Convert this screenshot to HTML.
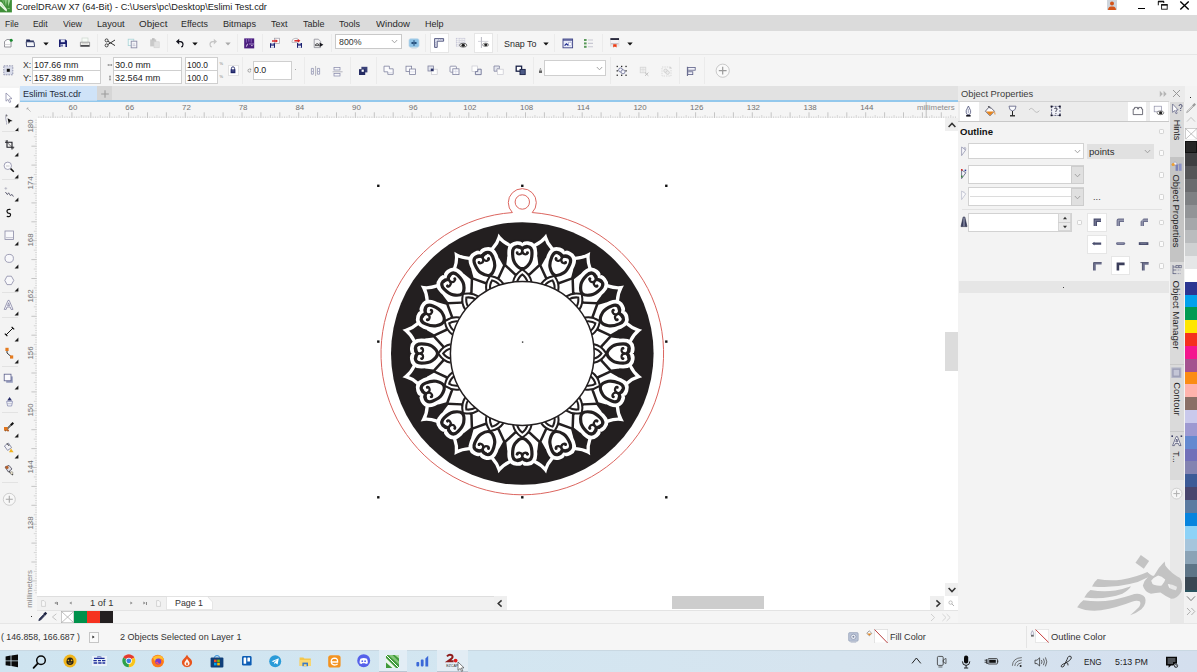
<!DOCTYPE html>
<html><head><meta charset="utf-8"><title>CorelDRAW X7</title>
<style>
html,body{margin:0;padding:0;background:#fff;}
body{width:1197px;height:672px;position:relative;overflow:hidden;font-family:"Liberation Sans",sans-serif;}
#r{position:absolute;left:0;top:0;width:1197px;height:672px;overflow:hidden;}
#r div,#r svg,#r span.t{position:absolute;}
#r span.t{white-space:pre;display:block;}
</style></head><body><div id="r">
<div style="left:0px;top:0px;width:1197px;height:15px;background:#ffffff;"></div>
<svg style="left:0px;top:0px;" width="12" height="12.5" viewBox="0 0 12 12.5"><rect width="11.9" height="12.4" fill="#3f8f39"/>
<path d="M4.4 0 L6 6.4 L7 0 Z" fill="#86c67e"/><path d="M7.6 0 L8.2 6.6 L10.4 0 Z" fill="#9fd497"/><path d="M2 0 L4.6 5.6 L3.6 0 Z" fill="#6db565"/>
<path d="M0 1.6 L1.8 2.4 L7 9.6 L6.8 11.4 L5 10.6 L0 5.8 Z" fill="#e9f7e5"/><path d="M1.4 4.2 L3.6 7.2" stroke="#4f9a48" stroke-width="0.5" stroke-dasharray="0.6 0.5"/>
<rect x="7.6" y="8.1" width="2.1" height="0.8" fill="#93d38b"/></svg>
<span class="t" style="left:15.7px;top:-0.7000000000000002px;height:16px;line-height:16px;font-size:9.3px;color:#1a1a1a;transform:scaleX(0.9913);transform-origin:0 50%;">CorelDRAW X7 (64-Bit) - C:\Users\pc\Desktop\Eslimi Test.cdr</span>
<svg style="left:1107px;top:0px;" width="10" height="10" viewBox="0 0 10 10"><rect width="10" height="10" fill="#cfd5dc"/>
<circle cx="5" cy="3.6" r="2" fill="#d4541a"/>
<path d="M1 10 Q1.2 7 4 6.6 L6 6.6 Q8.8 7 9 10 Z" fill="#d4541a"/></svg>
<div style="left:1137.6px;top:7.6px;width:7.8px;height:1.4px;background:#000;"></div>
<svg style="left:1157px;top:0px;" width="12" height="11" viewBox="0 0 12 11"><path d="M1.3 5.3 V1.3 H6.8 V3" fill="none" stroke="#111" stroke-width="1"/><path d="M1 1.6 H7" stroke="#111" stroke-width="1.4"/>
<rect x="4.6" y="4.6" width="5.6" height="4.6" fill="#fff" stroke="#111" stroke-width="0.9"/><path d="M4.3 4.9 H10.5" stroke="#111" stroke-width="1.5"/></svg>
<svg style="left:1179px;top:0px;" width="12" height="11" viewBox="0 0 12 11"><path d="M1.3 1.6 L9.7 9.4 M9.7 1.6 L1.3 9.4" stroke="#000" stroke-width="1.4" fill="none"/></svg>
<div style="left:0px;top:15px;width:1197px;height:16px;background:#dbdbdb;"></div>
<span class="t" style="left:4.5px;top:16.1px;height:16px;line-height:16px;font-size:9.3px;color:#2a2a2a;transform:scaleX(0.9143);transform-origin:0 50%;">File</span>
<span class="t" style="left:33px;top:16.1px;height:16px;line-height:16px;font-size:9.3px;color:#2a2a2a;transform:scaleX(0.9048);transform-origin:0 50%;">Edit</span>
<span class="t" style="left:63px;top:16.1px;height:16px;line-height:16px;font-size:9.3px;color:#2a2a2a;transform:scaleX(0.9505);transform-origin:0 50%;">View</span>
<span class="t" style="left:97.2px;top:16.1px;height:16px;line-height:16px;font-size:9.3px;color:#2a2a2a;transform:scaleX(0.9885);transform-origin:0 50%;">Layout</span>
<span class="t" style="left:139px;top:16.1px;height:16px;line-height:16px;font-size:9.3px;color:#2a2a2a;transform:scaleX(1.0604);transform-origin:0 50%;">Object</span>
<span class="t" style="left:181.3px;top:16.1px;height:16px;line-height:16px;font-size:9.3px;color:#2a2a2a;transform:scaleX(0.9555);transform-origin:0 50%;">Effects</span>
<span class="t" style="left:222.5px;top:16.1px;height:16px;line-height:16px;font-size:9.3px;color:#2a2a2a;transform:scaleX(0.9823);transform-origin:0 50%;">Bitmaps</span>
<span class="t" style="left:270.5px;top:16.1px;height:16px;line-height:16px;font-size:9.3px;color:#2a2a2a;transform:scaleX(0.9674);transform-origin:0 50%;">Text</span>
<span class="t" style="left:302.5px;top:16.1px;height:16px;line-height:16px;font-size:9.3px;color:#2a2a2a;transform:scaleX(0.9671);transform-origin:0 50%;">Table</span>
<span class="t" style="left:339px;top:16.1px;height:16px;line-height:16px;font-size:9.3px;color:#2a2a2a;transform:scaleX(0.9673);transform-origin:0 50%;">Tools</span>
<span class="t" style="left:375.5px;top:16.1px;height:16px;line-height:16px;font-size:9.3px;color:#2a2a2a;transform:scaleX(1.0279);transform-origin:0 50%;">Window</span>
<span class="t" style="left:424.5px;top:16.1px;height:16px;line-height:16px;font-size:9.3px;color:#2a2a2a;transform:scaleX(0.9673);transform-origin:0 50%;">Help</span>
<div style="left:0px;top:31px;width:1197px;height:55px;background:#f5f5f5;"></div>
<div style="left:0px;top:53.6px;width:1197px;height:0.8px;background:#e6e6e6;"></div>
<div style="left:0px;top:86px;width:1197px;height:15px;background:#e2e2e2;"></div>
<div style="left:0px;top:86px;width:20px;height:537px;background:#f3f3f3;"></div>
<div style="left:958px;top:86px;width:239px;height:537px;background:#f3f3f3;"></div>
<div style="left:0px;top:623px;width:1197px;height:27px;background:#f6f6f6;"></div>
<div style="left:0px;top:650px;width:1197px;height:22px;background:linear-gradient(90deg,#cfe4f0 0%,#d3e6f1 40%,#d6e4ef 70%,#d4dfee 100%);"></div>
<svg style="left:3px;top:38px;" width="11" height="10" viewBox="0 0 11 10"><path d="M1.5 3.5 L4 1.5 H8 V9 H1.5 Z" fill="#fdfdfd" stroke="#8a8a92" stroke-width="0.9"/><path d="M1.5 6.5 H8" stroke="#c8c8cc" stroke-width="0.7"/><circle cx="8.2" cy="2.3" r="1.5" fill="#1a8a2e"/></svg>
<svg style="left:25px;top:38px;" width="11" height="10" viewBox="0 0 11 10"><path d="M1.2 1.6 H4.6 L5.4 2.6 H8.8 V4 H1.2 Z" fill="#1b2350"/><path d="M1.2 3.8 H9 L9.6 8.6 H1.6 Z" fill="#f4f6fa" stroke="#27305e" stroke-width="0.9"/></svg>
<svg style="left:42.5px;top:42px;" width="6" height="4" viewBox="0 0 6 4"><path d="M0.3 0.6 H5.7 L3 3.6 Z" fill="#111"/></svg>
<svg style="left:58px;top:38px;" width="10" height="10" viewBox="0 0 10 10"><path d="M1 1.4 H7.6 L9 2.8 V9 H1 Z" fill="#1b2070"/><rect x="2.8" y="1.6" width="4" height="2.6" fill="#dfe3f3"/><rect x="2.6" y="6" width="4.8" height="3" fill="#e9ecf7"/><rect x="3.4" y="6.5" width="1.2" height="2" fill="#1b2070"/></svg>
<svg style="left:79px;top:37px;" width="12" height="11" viewBox="0 0 12 11"><rect x="3" y="1" width="6" height="4.6" fill="#f6fbf6" stroke="#cdd6cf" stroke-width="0.7"/><path d="M1.4 5.2 H10.6 V9.4 H1.4 Z" fill="#efefec" stroke="#8a8a8c" stroke-width="0.8"/><rect x="1.6" y="8" width="8.8" height="1.6" fill="#4a4a4e"/><path d="M3 6.6 H9" stroke="#c9c9c6" stroke-width="0.6"/></svg>
<div style="left:97px;top:34px;width:1px;height:18px;background:#ebebeb;"></div>
<svg style="left:104px;top:38px;" width="12" height="10" viewBox="0 0 12 10"><circle cx="2.6" cy="2.4" r="1.5" fill="none" stroke="#333" stroke-width="0.9"/><circle cx="2.6" cy="7.4" r="1.5" fill="none" stroke="#333" stroke-width="0.9"/><path d="M3.8 3.2 L11 7.6 M3.8 6.6 L11 2" stroke="#333" stroke-width="1" fill="none"/></svg>
<svg style="left:127px;top:38px;" width="12" height="11" viewBox="0 0 12 11"><rect x="1.2" y="1.2" width="5.6" height="6.4" fill="#f3fbfb" stroke="#a9d3d6" stroke-width="0.8"/><rect x="4.2" y="3.2" width="5.6" height="6.6" fill="#f5f5f9" stroke="#8c8ca6" stroke-width="0.9"/><path d="M5.6 6 H8 M5.6 7.6 H8.4" stroke="#b7b7c6" stroke-width="0.7"/></svg>
<svg style="left:149px;top:37px;" width="12" height="12" viewBox="0 0 12 12"><rect x="1.2" y="2.4" width="6" height="7" fill="#c9c9c9"/><rect x="3" y="1.2" width="2.6" height="2" fill="#bdbdbd"/><rect x="5" y="4.8" width="5.2" height="6" fill="#e1e1e1" stroke="#cfcfcf" stroke-width="0.6"/></svg>
<div style="left:167px;top:34px;width:1px;height:18px;background:#ebebeb;"></div>
<svg style="left:175px;top:38px;" width="10" height="10" viewBox="0 0 10 10"><path d="M1 3.6 L4.2 0.8 V6.4 Z" fill="#14141e"/><path d="M3.6 3.6 H5.4 Q8 3.8 8 6.4 Q8 8.4 6.2 9" fill="none" stroke="#14141e" stroke-width="1.2"/></svg>
<svg style="left:192.3px;top:41.5px;" width="6" height="4" viewBox="0 0 6 4"><path d="M0.3 0.6 H5.7 L3 3.6 Z" fill="#111"/></svg>
<svg style="left:208px;top:38px;" width="10" height="10" viewBox="0 0 10 10"><path d="M9 3.6 L5.8 0.8 V6.4 Z" fill="#c6c6c6"/><path d="M6.4 3.6 H4.6 Q2 3.8 2 6.4 Q2 8.4 3.8 9" fill="none" stroke="#c6c6c6" stroke-width="1.2"/></svg>
<svg style="left:224.5px;top:41.5px;" width="6" height="4" viewBox="0 0 6 4"><path d="M0.3 0.6 H5.7 L3 3.6 Z" fill="#a9a9a9"/></svg>
<div style="left:236.5px;top:34px;width:1px;height:18px;background:#ebebeb;"></div>
<svg style="left:244px;top:37.5px;" width="11" height="11" viewBox="0 0 11 11"><rect x="0.2" y="0.4" width="10" height="10" fill="#4a1d7e"/><path d="M2.4 0.4 V4.6 M4.8 0.4 V3.6 M7.2 0.4 V4.6" stroke="#8e6bbd" stroke-width="0.9"/><path d="M5 6 H10.2" stroke="#b9a2d8" stroke-width="0.8"/><path d="M3.6 5.8 L2.4 8.6 M7.2 7.6 H8.6" stroke="#efe8f8" stroke-width="0.9"/></svg>
<div style="left:262px;top:34px;width:1px;height:18px;background:#ebebeb;"></div>
<svg style="left:269px;top:37px;" width="12" height="12" viewBox="0 0 12 12"><rect x="5.4" y="1.2" width="5.2" height="5.4" fill="#fafafa" stroke="#9a9aa6" stroke-width="0.7"/><path d="M3 4 H7.2" stroke="#d81e1e" stroke-width="1.4"/><path d="M6.6 2.2 L9 4 L6.6 5.8 Z" fill="#d81e1e"/><rect x="1" y="6.2" width="5" height="4.6" fill="#1b2070"/><rect x="2" y="8.6" width="3" height="2.2" fill="#e6e9f5"/><rect x="2.2" y="6.2" width="2.4" height="1.3" fill="#cfd4ee"/></svg>
<svg style="left:291px;top:37px;" width="12" height="12" viewBox="0 0 12 12"><path d="M1 4.6 Q1 1.6 4 1.4 L6.4 1.4 V5.4 H1 Z" fill="#fafafa" stroke="#a5a5ae" stroke-width="0.7"/><path d="M3.4 3.8 H7.6" stroke="#d81e1e" stroke-width="1.4"/><path d="M7 2 L9.4 3.8 L7 5.6 Z" fill="#d81e1e"/><rect x="6" y="6" width="5" height="4.8" fill="#1b2070"/><rect x="7" y="8.6" width="3" height="2.2" fill="#e6e9f5"/><rect x="7.2" y="6" width="2.4" height="1.3" fill="#cfd4ee"/></svg>
<svg style="left:313px;top:37.5px;" width="12" height="11" viewBox="0 0 12 11"><path d="M1.2 1.2 H5.4 L7.6 3.4 V9.6 H1.2 Z" fill="#f1f1f3" stroke="#8d8d96" stroke-width="0.8"/><path d="M2.2 6.8 Q4 4.6 6 6.6" stroke="#222" stroke-width="0.9" fill="none"/><path d="M6.6 4.6 L10.4 6.8 L6.6 9 Z" fill="#15151c"/><path d="M2 7.6 H6.6" stroke="#333" stroke-width="0.8"/></svg>
<div style="left:330.5px;top:34px;width:1px;height:18px;background:#ebebeb;"></div>
<div style="left:335px;top:33.5px;width:66.5px;height:15px;background:#fff;border:1px solid #c9c9c9;box-sizing:border-box;"></div>
<span class="t" style="left:338.5px;top:33.9px;height:16px;line-height:16px;font-size:9.1px;color:#333;transform:scaleX(0.9668);transform-origin:0 50%;">800%</span>
<svg style="left:391px;top:38.5px;" width="7" height="5" viewBox="0 0 7 5"><path d="M0.8 1 L3.5 3.8 L6.2 1" fill="none" stroke="#9a9a9a" stroke-width="0.9"/></svg>
<svg style="left:407.5px;top:37.5px;" width="12" height="11" viewBox="0 0 12 11"><rect x="1" y="0.8" width="10" height="8.4" rx="1.6" fill="#8fc3e6" stroke="#bcd7e8" stroke-width="0.8"/><path d="M3 5 H9 M6 2.2 V7.8" stroke="#123a6a" stroke-width="0.9"/><path d="M4 3.8 L5.2 5 L4 6.2 Z M8 3.8 L6.8 5 L8 6.2 Z" fill="#123a6a"/><path d="M3.4 10.2 H8.6" stroke="#c9d5dd" stroke-width="0.8"/></svg>
<div style="left:424.5px;top:34px;width:1px;height:18px;background:#ebebeb;"></div>
<div style="left:429.5px;top:33px;width:19.5px;height:19.5px;background:#fff;border:1px solid #e6e6e6;box-sizing:border-box;"></div>
<svg style="left:433px;top:37px;" width="12" height="12" viewBox="0 0 12 12"><path d="M1.6 1.6 H10.6 V4.2 H4.2 V10.4 H1.6 Z" fill="#e4e7f3" stroke="#4a4e78" stroke-width="0.9"/><path d="M5.5 1.8 V3 M7.5 1.8 V3 M9.2 1.8 V3 M1.8 5.6 H3 M1.8 7.4 H3 M1.8 9 H3" stroke="#8f93b5" stroke-width="0.5"/></svg>
<svg style="left:455px;top:37px;" width="13" height="12" viewBox="0 0 13 12"><path d="M1 1.4 H10 M1 3.4 H10 M1 5.4 H10 M1 7.4 H10 M1 9.2 H6 M1.4 1 V9.6 M4.2 1 V9.6 M7 1 V8 M9.8 1 V6" stroke="#b9b9cf" stroke-width="0.6" stroke-dasharray="0.9 0.5"/><ellipse cx="8.2" cy="8.2" rx="3.6" ry="1.9" fill="#fff" stroke="#444" stroke-width="0.8"/><ellipse cx="8.2" cy="8.2" rx="1.7" ry="1.5" fill="#1a1a1a"/></svg>
<div style="left:473.5px;top:33px;width:19.5px;height:19.5px;background:#fff;border:1px solid #e6e6e6;box-sizing:border-box;"></div>
<svg style="left:477px;top:36px;" width="13" height="13" viewBox="0 0 13 13"><path d="M4.4 1 V12" stroke="#9a9aa8" stroke-width="0.7"/><path d="M1 5.4 H11.4" stroke="#c2c2cc" stroke-width="0.7"/><ellipse cx="8.6" cy="8.8" rx="3" ry="1.7" fill="#fff" stroke="#666" stroke-width="0.7"/><ellipse cx="8.8" cy="8.8" rx="1.6" ry="1.4" fill="#222"/></svg>
<div style="left:496.5px;top:34px;width:1px;height:18px;background:#ebebeb;"></div>
<span class="t" style="left:503.5px;top:35.6px;height:16px;line-height:16px;font-size:9.3px;color:#2a2a2a;transform:scaleX(0.9571);transform-origin:0 50%;">Snap To</span>
<svg style="left:542.5px;top:41.5px;" width="6" height="4" viewBox="0 0 6 4"><path d="M0.3 0.6 H5.7 L3 3.6 Z" fill="#111"/></svg>
<div style="left:554px;top:34px;width:1px;height:18px;background:#ebebeb;"></div>
<svg style="left:561.5px;top:37.5px;" width="12" height="11" viewBox="0 0 12 11"><rect x="1" y="1" width="9.6" height="8.8" fill="#e9ecf8" stroke="#3f4488" stroke-width="0.9"/><path d="M1 2 H10.6" stroke="#3f4488" stroke-width="1.3"/><path d="M2.6 7.6 L4.4 5.8 L6 7.2 L8.6 4.2" stroke="#1d2a8c" stroke-width="1.2" fill="none"/><rect x="6.6" y="4.2" width="2.8" height="3.2" fill="#fff" stroke="#9da3cf" stroke-width="0.5"/></svg>
<svg style="left:583px;top:37.5px;" width="12" height="11" viewBox="0 0 12 11"><rect x="1" y="1" width="2.6" height="2" fill="#5a9a5a"/><rect x="1" y="4.4" width="2.6" height="2" fill="#5a9a5a"/><rect x="1" y="7.8" width="2.6" height="2" fill="#5a9a5a"/><path d="M5 2 H10 M5 5.4 H10 M5 8.8 H10" stroke="#c8c8d2" stroke-width="1.1"/></svg>
<div style="left:601.5px;top:34px;width:1px;height:18px;background:#ebebeb;"></div>
<svg style="left:609px;top:37px;" width="12" height="12" viewBox="0 0 12 12"><rect x="1.4" y="1.4" width="8.6" height="7.6" fill="#f4f2f4" stroke="#d8d4d8" stroke-width="0.6"/><rect x="1.4" y="1.2" width="8.6" height="1.7" fill="#15152a"/><path d="M1.8 6.8 H9.6" stroke="#c9bfc3" stroke-width="1.4"/><path d="M4.2 7.2 H7.6 V10.6 L5.9 9.4 L4.2 10.6 Z" fill="#ee3a12"/></svg>
<svg style="left:626.8px;top:41.5px;" width="6" height="4" viewBox="0 0 6 4"><path d="M0.3 0.6 H5.7 L3 3.6 Z" fill="#111"/></svg>
<svg style="left:3px;top:65px;" width="11" height="11" viewBox="0 0 11 11"><rect x="0.8" y="0.8" width="9" height="9" fill="#d9dcea" stroke="#7d819f" stroke-width="0.8" stroke-dasharray="1.6 1"/><rect x="3.8" y="3.8" width="3" height="3" fill="#111"/></svg>
<span class="t" style="left:22.5px;top:57px;height:16px;line-height:16px;font-size:9.1px;color:#333;transform:scaleX(0.9537);transform-origin:0 50%;">X:</span>
<span class="t" style="left:22.5px;top:70px;height:16px;line-height:16px;font-size:9.1px;color:#333;transform:scaleX(1.0128);transform-origin:0 50%;">Y:</span>
<div style="left:32px;top:57px;width:68.5px;height:14px;background:#fff;border:1px solid #cfcfcf;box-sizing:border-box;"></div>
<div style="left:32px;top:70px;width:68.5px;height:14px;background:#fff;border:1px solid #cfcfcf;box-sizing:border-box;"></div>
<span class="t" style="left:33.8px;top:57.099999999999994px;height:16px;line-height:16px;font-size:9.0px;color:#222;transform:scaleX(0.9863);transform-origin:0 50%;">107.66 mm</span>
<span class="t" style="left:33.8px;top:70.1px;height:16px;line-height:16px;font-size:9.0px;color:#222;transform:scaleX(0.9875);transform-origin:0 50%;">157.389 mm</span>
<svg style="left:107px;top:61.5px;" width="6" height="6" viewBox="0 0 6 6"><path d="M1.2 3 H4.6 M1.2 2.2 V3.8 M4.6 2.2 V3.8" stroke="#666" stroke-width="0.7"/></svg>
<svg style="left:107px;top:74.5px;" width="6" height="6" viewBox="0 0 6 6"><path d="M3 1.2 V4.8 M2.2 1.2 H3.8 M2.2 4.8 H3.8" stroke="#666" stroke-width="0.7"/></svg>
<div style="left:113px;top:57px;width:68.5px;height:14px;background:#fff;border:1px solid #cfcfcf;box-sizing:border-box;"></div>
<div style="left:113px;top:70px;width:68.5px;height:14px;background:#fff;border:1px solid #cfcfcf;box-sizing:border-box;"></div>
<span class="t" style="left:114.5px;top:57.099999999999994px;height:16px;line-height:16px;font-size:9.0px;color:#222;transform:scaleX(1.0197);transform-origin:0 50%;">30.0 mm</span>
<span class="t" style="left:114.5px;top:70.1px;height:16px;line-height:16px;font-size:9.0px;color:#222;transform:scaleX(1.0063);transform-origin:0 50%;">32.564 mm</span>
<div style="left:184.5px;top:57px;width:33.5px;height:14px;background:#fff;border:1px solid #cfcfcf;box-sizing:border-box;"></div>
<div style="left:184.5px;top:70px;width:33.5px;height:14px;background:#fff;border:1px solid #cfcfcf;box-sizing:border-box;"></div>
<span class="t" style="left:186.5px;top:57.099999999999994px;height:16px;line-height:16px;font-size:9.0px;color:#222;transform:scaleX(0.9325);transform-origin:0 50%;">100.0</span>
<span class="t" style="left:186.5px;top:70.1px;height:16px;line-height:16px;font-size:9.0px;color:#222;transform:scaleX(0.9325);transform-origin:0 50%;">100.0</span>
<span class="t" style="left:219.4px;top:55.8px;height:16px;line-height:16px;font-size:4px;color:#777;">%</span>
<span class="t" style="left:219.4px;top:69px;height:16px;line-height:16px;font-size:4px;color:#777;">%</span>
<div style="left:227.5px;top:65px;width:11px;height:10.5px;background:#fff;border:1px solid #e2e2e2;box-sizing:border-box;"></div>
<svg style="left:230px;top:66.2px;" width="6" height="8" viewBox="0 0 6 8"><path d="M1.4 4 V2.4 Q1.4 0.8 3 0.8 Q4.6 0.8 4.6 2.4 V4" fill="none" stroke="#222a6e" stroke-width="0.9"/><rect x="0.6" y="3.4" width="4.8" height="3.8" fill="#1d2366"/><rect x="1.6" y="4.6" width="2.8" height="0.7" fill="#7a80b8"/></svg>
<div style="left:241.5px;top:57px;width:1px;height:27px;background:#ebebeb;"></div>
<svg style="left:246.5px;top:68px;" width="5" height="5" viewBox="0 0 5 5"><path d="M3.8 1.6 Q2.4 0.4 1.2 1.6 Q0.4 3 1.6 4 Q3 4.6 3.9 3.4" fill="none" stroke="#777" stroke-width="0.6"/><path d="M3 0.6 L4.2 1.6 L3 2.4" fill="none" stroke="#777" stroke-width="0.5"/></svg>
<div style="left:253px;top:60.5px;width:38.5px;height:19.5px;background:#fff;border:1px solid #cfcfcf;box-sizing:border-box;"></div>
<span class="t" style="left:254.3px;top:62.3px;height:16px;line-height:16px;font-size:9.0px;color:#222;transform:scaleX(0.9752);transform-origin:0 50%;">0.0</span>
<div style="left:295px;top:69px;width:0.9px;height:0.9px;background:#aaa;"></div>
<div style="left:303.5px;top:57px;width:1px;height:27px;background:#ebebeb;"></div>
<svg style="left:310px;top:64.5px;" width="12" height="12" viewBox="0 0 12 12"><path d="M5.6 1 V11" stroke="#8a8a9a" stroke-width="0.6"/><path d="M1.4 3.4 H3.4 V9.2 H1.4 Z" fill="#f8f8fb" stroke="#8486a8" stroke-width="0.7"/><path d="M7.4 3.4 H9.6 V9.2 H7.4 Z" fill="#f8f8fb" stroke="#8486a8" stroke-width="0.7"/><path d="M2 7 Q2.6 5.8 3.2 7 M8 7 Q8.6 5.8 9.2 7" stroke="#8486a8" stroke-width="0.6" fill="none"/></svg>
<svg style="left:331.5px;top:65.5px;" width="12" height="12" viewBox="0 0 12 12"><path d="M0.6 5.8 H10.6" stroke="#8a8a9a" stroke-width="0.6"/><rect x="2" y="1.4" width="6" height="2.6" fill="#f8f8fb" stroke="#8486a8" stroke-width="0.7"/><rect x="2" y="7.4" width="6" height="2.6" fill="#f8f8fb" stroke="#8486a8" stroke-width="0.7"/></svg>
<div style="left:350px;top:57px;width:1px;height:27px;background:#ebebeb;"></div>
<svg style="left:357.5px;top:66px;" width="11" height="10" viewBox="0 0 11 10"><rect x="3.4" y="0.8" width="6" height="5.6" fill="#3a4178"/><rect x="1" y="3.2" width="6.2" height="5.8" fill="#252c63"/><rect x="3.6" y="3.6" width="2.2" height="2.2" fill="#fff"/></svg>
<div style="left:376px;top:57px;width:1px;height:27px;background:#ebebeb;"></div>
<svg style="left:382.5px;top:65.3px;" width="12" height="11" viewBox="0 0 12 11"><path d="M1 1.2 H6.4 V3.8 H10.2 V9.4 H4.8 V6.8 H1 Z" fill="#fbfbfd" stroke="#80839f" stroke-width="0.8"/><path d="M5 7.6 H10" stroke="#c9cbdc" stroke-width="0.5"/></svg>
<svg style="left:404.5px;top:65.3px;" width="12" height="11" viewBox="0 0 12 11"><rect x="1" y="1.2" width="5.6" height="5.2" fill="#fbfbfd" stroke="#80839f" stroke-width="0.8"/><rect x="4.6" y="4" width="5.8" height="5.4" fill="#fbfbfd" stroke="#80839f" stroke-width="0.8"/><path d="M5 6.8 H10" stroke="#c9cbdc" stroke-width="0.5"/></svg>
<svg style="left:426.5px;top:65.3px;" width="12" height="11" viewBox="0 0 12 11"><rect x="4.4" y="4.2" width="5.8" height="5.2" fill="#fdfdfd" stroke="#c8c8cf" stroke-width="0.7"/><rect x="1" y="1" width="5.4" height="5" fill="#e2e4ee" stroke="#80839f" stroke-width="0.8"/><rect x="3.8" y="3.6" width="2.6" height="2.4" fill="#2c3266"/></svg>
<svg style="left:448.5px;top:65.3px;" width="12" height="11" viewBox="0 0 12 11"><rect x="1" y="1.2" width="6.4" height="6" rx="0.8" fill="#fbfbfd" stroke="#80839f" stroke-width="0.8"/><rect x="3.8" y="3.8" width="6.2" height="5.8" fill="#fbfbfd" stroke="#80839f" stroke-width="0.8"/><path d="M4.2 6.4 H9.6 M6.8 4.2 V9.2" stroke="#c9cbdc" stroke-width="0.5"/></svg>
<svg style="left:470.5px;top:65.3px;" width="12" height="11" viewBox="0 0 12 11"><rect x="1" y="1" width="5.6" height="5.4" fill="#fdfdfd" stroke="#c9c9d2" stroke-width="0.7"/><path d="M6.8 4.2 H10.2 V9.6 H4.4 V6.6 H6.8 Z" fill="#e9ebf3" stroke="#62668a" stroke-width="0.8"/></svg>
<svg style="left:492.5px;top:65.3px;" width="12" height="11" viewBox="0 0 12 11"><path d="M1 1 H6.4 V3.8 H4 V6.2 H1 Z" fill="#e6e8f0" stroke="#80839f" stroke-width="0.8"/><rect x="4.4" y="4.2" width="5.8" height="5.4" fill="#fdfdfd" stroke="#c9c9d2" stroke-width="0.7"/></svg>
<svg style="left:514.5px;top:65.3px;" width="12" height="11" viewBox="0 0 12 11"><rect x="1.2" y="1.2" width="5.4" height="5" fill="#fff" stroke="#1a2247" stroke-width="1.3"/><rect x="5" y="4.4" width="5.2" height="5.2" fill="#4c5a86" stroke="#1a2247" stroke-width="0.9"/></svg>
<div style="left:532.5px;top:57px;width:1px;height:27px;background:#ebebeb;"></div>
<svg style="left:537.5px;top:67px;" width="5" height="7" viewBox="0 0 5 7"><path d="M2.4 1 L3.6 2.6 H1.2 Z" fill="#777"/><rect x="1" y="3.4" width="3" height="2.6" fill="#666"/></svg>
<div style="left:544.3px;top:60.4px;width:62px;height:16px;background:#fff;border:1px solid #cfcfcf;box-sizing:border-box;"></div>
<svg style="left:596px;top:66px;" width="7" height="5" viewBox="0 0 7 5"><path d="M0.8 1 L3.5 3.8 L6.2 1" fill="none" stroke="#9a9a9a" stroke-width="0.9"/></svg>
<div style="left:609.5px;top:57px;width:1px;height:27px;background:#ebebeb;"></div>
<svg style="left:616px;top:65px;" width="12" height="12" viewBox="0 0 12 12"><g fill="#222"><rect x="0.6" y="0.8" width="1.3" height="1.3"/><rect x="5" y="0.8" width="1.3" height="1.3"/><rect x="9.4" y="0.8" width="1.3" height="1.3"/><rect x="0.6" y="5.2" width="1.3" height="1.3"/><rect x="9.4" y="5.2" width="1.3" height="1.3"/><rect x="0.6" y="9.6" width="1.3" height="1.3"/><rect x="5" y="9.6" width="1.3" height="1.3"/><rect x="9.4" y="9.6" width="1.3" height="1.3"/></g><circle cx="4.6" cy="5" r="2" fill="#f6f6fb" stroke="#5c608a" stroke-width="0.7"/><circle cx="7" cy="6.8" r="2" fill="#f6f6fb" stroke="#5c608a" stroke-width="0.7"/></svg>
<svg style="left:639px;top:66px;" width="12" height="11" viewBox="0 0 12 11"><rect x="1.2" y="1.2" width="5.6" height="5.6" fill="#efefef" stroke="#d2d2d2" stroke-width="0.7"/><path d="M1.2 3.6 H6.8 M4 1.2 V6.8" stroke="#d6d6d6" stroke-width="0.5"/><path d="M6 6.6 L9.4 9.8 M9.4 6.6 L6 9.8" stroke="#b9b9b9" stroke-width="0.9"/></svg>
<svg style="left:660.5px;top:66px;" width="12" height="11" viewBox="0 0 12 11"><rect x="1" y="1" width="9" height="9" fill="none" stroke="#cfcfcf" stroke-width="0.7" stroke-dasharray="1.4 1"/><circle cx="4.6" cy="4.8" r="1.8" fill="#ececec" stroke="#c3c3c3" stroke-width="0.6"/><circle cx="6.6" cy="6.6" r="1.8" fill="#ececec" stroke="#c3c3c3" stroke-width="0.6"/><path d="M8.6 1.2 L10 2.6 M10 1.2 L8.6 2.6" stroke="#bbb" stroke-width="0.5"/></svg>
<div style="left:679px;top:57px;width:1px;height:27px;background:#ebebeb;"></div>
<svg style="left:686px;top:66px;" width="11" height="11" viewBox="0 0 11 11"><path d="M1.4 0.8 V10" stroke="#4d5175" stroke-width="0.9"/><rect x="1.8" y="1.4" width="7.4" height="2.8" fill="#f4f4fa" stroke="#5a5e86" stroke-width="0.8"/><rect x="1.8" y="5.8" width="5" height="2.8" fill="#f4f4fa" stroke="#5a5e86" stroke-width="0.8"/></svg>
<div style="left:704px;top:57px;width:1px;height:27px;background:#ebebeb;"></div>
<svg style="left:714.5px;top:63px;" width="16" height="16" viewBox="0 0 16 16"><circle cx="7.7" cy="7.7" r="6.6" fill="#f9f9f9" stroke="#bdbdbd" stroke-width="0.8"/><path d="M3.8 7.7 H11.6 M7.7 3.8 V11.6" stroke="#9a9a9a" stroke-width="1.2"/></svg>
<div style="left:0px;top:87.5px;width:18.5px;height:19.5px;background:#ffffff;"></div>
<svg style="left:4px;top:91.5px;" width="10" height="12" viewBox="0 0 10 12"><path d="M2 1 L2 9.2 L4 7.4 L5.4 10.6 L6.8 10 L5.4 6.8 L8 6.6 Z" fill="#fff" stroke="#8c8ca8" stroke-width="0.8" stroke-linejoin="round"/></svg>
<svg style="left:14px;top:102.5px;" width="5" height="5" viewBox="0 0 5 5"><path d="M4.4 0.6 V4.4 H0.6 Z" fill="#1a1a1a"/></svg>
<svg style="left:3px;top:113px;" width="12" height="13" viewBox="0 0 12 13"><path d="M3.4 1 Q2 4 3 7 Q4 9.6 3.6 11.6" fill="none" stroke="#9a9ab0" stroke-width="0.8"/><circle cx="3.6" cy="2.6" r="0.9" fill="#777"/><path d="M4.6 5.2 L9.6 8 L7 8.6 L5.8 11 Z" fill="#111"/></svg>
<svg style="left:14px;top:126.5px;" width="5" height="5" viewBox="0 0 5 5"><path d="M4.4 0.6 V4.4 H0.6 Z" fill="#1a1a1a"/></svg>
<div style="left:2px;top:131px;width:16px;height:0.8px;background:#e2e2e2;"></div>
<svg style="left:4px;top:138.5px;" width="11" height="12" viewBox="0 0 11 12"><path d="M3 1 V8.2 H10.2 M1 3.2 H8 V10.6" fill="none" stroke="#1c1c24" stroke-width="1.1"/><path d="M1.4 1.6 L9.6 10" stroke="#444" stroke-width="0.7"/></svg>
<svg style="left:14px;top:152px;" width="5" height="5" viewBox="0 0 5 5"><path d="M4.4 0.6 V4.4 H0.6 Z" fill="#1a1a1a"/></svg>
<svg style="left:3px;top:161px;" width="12" height="12" viewBox="0 0 12 12"><circle cx="4.8" cy="4.8" r="3.7" fill="#fbfbfd" stroke="#8a8aa6" stroke-width="0.8"/><path d="M3 5 H6.6" stroke="#aaa" stroke-width="0.6"/><path d="M7.6 7.6 L10.8 10.8" stroke="#111" stroke-width="1.5"/></svg>
<svg style="left:14px;top:174px;" width="5" height="5" viewBox="0 0 5 5"><path d="M4.4 0.6 V4.4 H0.6 Z" fill="#1a1a1a"/></svg>
<div style="left:2px;top:179px;width:16px;height:0.8px;background:#e2e2e2;"></div>
<svg style="left:3px;top:186px;" width="12" height="13" viewBox="0 0 12 13"><path d="M2.8 1 V3.8 M1.4 2.4 H4.2" stroke="#a5a5b5" stroke-width="0.6"/><path d="M2.4 6 L4.4 8.6 L5.6 6.8 L7.4 9.6 L9 8.4 L10.4 10.6" fill="none" stroke="#55556a" stroke-width="0.9"/></svg>
<svg style="left:14px;top:197px;" width="5" height="5" viewBox="0 0 5 5"><path d="M4.4 0.6 V4.4 H0.6 Z" fill="#1a1a1a"/></svg>
<svg style="left:5px;top:208px;" width="8" height="11" viewBox="0 0 8 11"><path d="M5 1.4 Q1.8 1.2 2 3.6 Q2.4 5.4 4.2 5.4 Q6 5.6 5.4 7.4 Q4.6 9.2 2.2 8.4" fill="none" stroke="#111" stroke-width="1.2" stroke-linecap="round"/></svg>
<svg style="left:3.5px;top:229.5px;" width="11" height="11" viewBox="0 0 11 11"><rect x="1" y="1" width="8.4" height="8.4" fill="#f8f8fb" stroke="#8a8aa6" stroke-width="0.8"/><path d="M1.4 7.6 H9" stroke="#c9c9d6" stroke-width="1.2"/></svg>
<svg style="left:14px;top:241px;" width="5" height="5" viewBox="0 0 5 5"><path d="M4.4 0.6 V4.4 H0.6 Z" fill="#1a1a1a"/></svg>
<svg style="left:3.5px;top:253px;" width="11" height="11" viewBox="0 0 11 11"><ellipse cx="5.2" cy="5.4" rx="4.2" ry="4" fill="#f8f8fb" stroke="#8a8aa6" stroke-width="0.8"/></svg>
<svg style="left:14px;top:264px;" width="5" height="5" viewBox="0 0 5 5"><path d="M4.4 0.6 V4.4 H0.6 Z" fill="#1a1a1a"/></svg>
<svg style="left:3.5px;top:275px;" width="11" height="11" viewBox="0 0 11 11"><path d="M3 1.2 H7.4 L9.8 5.4 L7.4 9.6 H3 L0.8 5.4 Z" fill="#f8f8fb" stroke="#8a8aa6" stroke-width="0.8"/></svg>
<svg style="left:14px;top:287px;" width="5" height="5" viewBox="0 0 5 5"><path d="M4.4 0.6 V4.4 H0.6 Z" fill="#1a1a1a"/></svg>
<div style="left:2px;top:292.4px;width:16px;height:0.8px;background:#e2e2e2;"></div>
<svg style="left:3px;top:299px;" width="12" height="12" viewBox="0 0 12 12"><path d="M1.2 10.4 L5 1.4 H6.2 L10 10.4 H8 L7.2 8 H4 L3.2 10.4 Z M4.6 6.6 H6.6 L5.6 3.8 Z" fill="#f4f4fa" stroke="#77779a" stroke-width="0.7" fill-rule="evenodd"/></svg>
<svg style="left:14px;top:311px;" width="5" height="5" viewBox="0 0 5 5"><path d="M4.4 0.6 V4.4 H0.6 Z" fill="#1a1a1a"/></svg>
<div style="left:2px;top:317.4px;width:16px;height:0.8px;background:#e2e2e2;"></div>
<svg style="left:3.5px;top:325.5px;" width="11" height="11" viewBox="0 0 11 11"><path d="M2 9 L9 2" stroke="#111" stroke-width="1"/><path d="M0.8 7.6 L3.4 10.2 M7.6 0.8 L10.2 3.4" stroke="#111" stroke-width="1.2"/></svg>
<svg style="left:14px;top:336.5px;" width="5" height="5" viewBox="0 0 5 5"><path d="M4.4 0.6 V4.4 H0.6 Z" fill="#1a1a1a"/></svg>
<svg style="left:3.5px;top:346.5px;" width="11" height="13" viewBox="0 0 11 13"><path d="M3 2.4 V6 L7.6 10" fill="none" stroke="#222" stroke-width="0.9"/><rect x="1.4" y="0.8" width="3.2" height="3.2" fill="#e47a1e"/><rect x="6" y="8.4" width="3.2" height="3.2" fill="#e47a1e"/></svg>
<svg style="left:14px;top:359px;" width="5" height="5" viewBox="0 0 5 5"><path d="M4.4 0.6 V4.4 H0.6 Z" fill="#1a1a1a"/></svg>
<div style="left:2px;top:365.7px;width:16px;height:0.8px;background:#e2e2e2;"></div>
<svg style="left:3px;top:373px;" width="12" height="12" viewBox="0 0 12 12"><rect x="3.2" y="3.4" width="6.6" height="6.4" fill="#9aa0c0"/><rect x="1.2" y="1.2" width="6.8" height="6.6" fill="#f9f9fc" stroke="#5a5e8a" stroke-width="0.8"/></svg>
<svg style="left:14px;top:385px;" width="5" height="5" viewBox="0 0 5 5"><path d="M4.4 0.6 V4.4 H0.6 Z" fill="#1a1a1a"/></svg>
<svg style="left:3.5px;top:395.5px;" width="11" height="12" viewBox="0 0 11 12"><path d="M5.6 1 L8 4.4 H3.2 Z" fill="#2a2f6a"/><path d="M2.6 5.4 H8.6 L7.6 10 H3.6 Z" fill="#eef0f8" stroke="#7f84ad" stroke-width="0.7"/><path d="M3 7.6 H8.2" stroke="#aab" stroke-width="0.6"/></svg>
<div style="left:2px;top:412px;width:16px;height:0.8px;background:#e2e2e2;"></div>
<svg style="left:3px;top:421px;" width="12" height="12" viewBox="0 0 12 12"><path d="M9.6 1 L11 2.4 L8.6 5 L7 3.4 Z" fill="#111"/><path d="M7.4 4 L2.6 8.8 L2 10 L3.2 9.4 L8 4.6" fill="none" stroke="#222" stroke-width="0.9"/><rect x="1" y="6" width="3.6" height="3.6" fill="#e2761c"/><circle cx="5" cy="9.6" r="1" fill="#b4551a"/></svg>
<svg style="left:14px;top:433px;" width="5" height="5" viewBox="0 0 5 5"><path d="M4.4 0.6 V4.4 H0.6 Z" fill="#1a1a1a"/></svg>
<svg style="left:3px;top:441.5px;" width="12" height="12" viewBox="0 0 12 12"><path d="M5.4 1 L8.6 5.6 L4.6 8.4 L1.4 4 Z" fill="#f2f2f6" stroke="#666a8a" stroke-width="0.7"/><path d="M8 6.4 L10.6 10.2 H6 Z" fill="#f0b21e"/><path d="M4 1.4 L6 3.8" stroke="#222" stroke-width="1"/></svg>
<svg style="left:14px;top:453.5px;" width="5" height="5" viewBox="0 0 5 5"><path d="M4.4 0.6 V4.4 H0.6 Z" fill="#1a1a1a"/></svg>
<svg style="left:3px;top:464px;" width="12" height="12" viewBox="0 0 12 12"><path d="M2 3 L6 1.4 L9 5 L5.4 8 Z" fill="#dedee6" stroke="#4a4a5a" stroke-width="0.8"/><circle cx="4" cy="3.4" r="1.6" fill="#b4602a"/><path d="M6 7.4 L10 11" stroke="#333" stroke-width="1.2"/><circle cx="8.6" cy="9" r="1.4" fill="#e8e0c8" stroke="#777" stroke-width="0.5"/></svg>
<div style="left:2px;top:481.7px;width:16px;height:0.8px;background:#e2e2e2;"></div>
<svg style="left:2px;top:492px;" width="15" height="15" viewBox="0 0 15 15"><circle cx="7.3" cy="7.3" r="6" fill="#f7f7f7" stroke="#c4c4c4" stroke-width="0.8"/><path d="M3.8 7.3 H10.8 M7.3 3.8 V10.8" stroke="#a8a8a8" stroke-width="1.1"/></svg>
<div style="left:20px;top:86px;width:77px;height:15px;background:#cfe3f8;"></div>
<span class="t" style="left:22.6px;top:85.6px;height:16px;line-height:16px;font-size:9.1px;color:#1e2a3a;transform:scaleX(0.9917);transform-origin:0 50%;">Eslimi Test.cdr</span>
<div style="left:97px;top:86px;width:14.5px;height:15px;background:#d6d6d6;"></div>
<svg style="left:99.5px;top:88.5px;" width="10" height="10" viewBox="0 0 10 10"><path d="M5 1.2 V8.8 M1.2 5 H8.8" stroke="#9c9c9c" stroke-width="1.1"/></svg>
<div style="left:20px;top:100.2px;width:937.5px;height:1.8px;background:#93c8ec;"></div>
<div style="left:20px;top:100.2px;width:77px;height:0.9px;background:#b9d9f3;"></div>
<div style="left:20px;top:102px;width:937.5px;height:16px;background:#f5f5f5;"></div>
<div style="left:20px;top:118px;width:17px;height:491.6px;background:#f5f5f5;"></div>
<svg style="left:26px;top:107px;" width="6" height="6" viewBox="0 0 6 6"><path d="M1 1 L4.6 4.6 M2.6 1 H1 V2.6" stroke="#9a9a9a" stroke-width="0.6" fill="none"/></svg>
<svg style="left:20px;top:102px;" width="938" height="16" viewBox="20 102 938 16"><path d="M53.00 112.3V118M71.90 112.3V118M90.80 112.3V118M109.70 112.3V118M128.60 112.3V118M147.50 112.3V118M166.40 112.3V118M185.30 112.3V118M204.20 112.3V118M223.10 112.3V118M242.00 112.3V118M260.90 112.3V118M279.80 112.3V118M298.70 112.3V118M317.60 112.3V118M336.50 112.3V118M355.40 112.3V118M374.30 112.3V118M393.20 112.3V118M412.10 112.3V118M431.00 112.3V118M449.90 112.3V118M468.80 112.3V118M487.70 112.3V118M506.60 112.3V118M525.50 112.3V118M544.40 112.3V118M563.30 112.3V118M582.20 112.3V118M601.10 112.3V118M620.00 112.3V118M638.90 112.3V118M657.80 112.3V118M676.70 112.3V118M695.60 112.3V118M714.50 112.3V118M733.40 112.3V118M752.30 112.3V118M771.20 112.3V118M790.10 112.3V118M809.00 112.3V118M827.90 112.3V118M846.80 112.3V118M865.70 112.3V118M884.60 112.3V118M903.50 112.3V118M922.40 112.3V118M941.30 112.3V118" stroke="#b9b9b9" stroke-width="0.8" fill="none"/><path d="M38.83 116.4V118M41.19 116.4V118M43.55 115V118M45.91 116.4V118M48.28 116.4V118M50.64 116.4V118M55.36 116.4V118M57.73 116.4V118M60.09 116.4V118M62.45 115V118M64.81 116.4V118M67.18 116.4V118M69.54 116.4V118M74.26 116.4V118M76.62 116.4V118M78.99 116.4V118M81.35 115V118M83.71 116.4V118M86.08 116.4V118M88.44 116.4V118M93.16 116.4V118M95.53 116.4V118M97.89 116.4V118M100.25 115V118M102.61 116.4V118M104.97 116.4V118M107.34 116.4V118M112.06 116.4V118M114.43 116.4V118M116.79 116.4V118M119.15 115V118M121.51 116.4V118M123.88 116.4V118M126.24 116.4V118M130.96 116.4V118M133.32 116.4V118M135.69 116.4V118M138.05 115V118M140.41 116.4V118M142.78 116.4V118M145.14 116.4V118M149.86 116.4V118M152.22 116.4V118M154.59 116.4V118M156.95 115V118M159.31 116.4V118M161.68 116.4V118M164.04 116.4V118M168.76 116.4V118M171.12 116.4V118M173.49 116.4V118M175.85 115V118M178.21 116.4V118M180.57 116.4V118M182.94 116.4V118M187.66 116.4V118M190.02 116.4V118M192.39 116.4V118M194.75 115V118M197.11 116.4V118M199.47 116.4V118M201.84 116.4V118M206.56 116.4V118M208.92 116.4V118M211.29 116.4V118M213.65 115V118M216.01 116.4V118M218.38 116.4V118M220.74 116.4V118M225.46 116.4V118M227.82 116.4V118M230.19 116.4V118M232.55 115V118M234.91 116.4V118M237.28 116.4V118M239.64 116.4V118M244.36 116.4V118M246.72 116.4V118M249.09 116.4V118M251.45 115V118M253.81 116.4V118M256.17 116.4V118M258.54 116.4V118M263.26 116.4V118M265.62 116.4V118M267.99 116.4V118M270.35 115V118M272.71 116.4V118M275.07 116.4V118M277.44 116.4V118M282.16 116.4V118M284.52 116.4V118M286.89 116.4V118M289.25 115V118M291.61 116.4V118M293.98 116.4V118M296.34 116.4V118M301.06 116.4V118M303.42 116.4V118M305.79 116.4V118M308.15 115V118M310.51 116.4V118M312.88 116.4V118M315.24 116.4V118M319.96 116.4V118M322.32 116.4V118M324.69 116.4V118M327.05 115V118M329.41 116.4V118M331.77 116.4V118M334.14 116.4V118M338.86 116.4V118M341.23 116.4V118M343.59 116.4V118M345.95 115V118M348.31 116.4V118M350.67 116.4V118M353.04 116.4V118M357.76 116.4V118M360.12 116.4V118M362.49 116.4V118M364.85 115V118M367.21 116.4V118M369.57 116.4V118M371.94 116.4V118M376.66 116.4V118M379.02 116.4V118M381.39 116.4V118M383.75 115V118M386.11 116.4V118M388.48 116.4V118M390.84 116.4V118M395.56 116.4V118M397.92 116.4V118M400.29 116.4V118M402.65 115V118M405.01 116.4V118M407.38 116.4V118M409.74 116.4V118M414.46 116.4V118M416.82 116.4V118M419.19 116.4V118M421.55 115V118M423.91 116.4V118M426.27 116.4V118M428.64 116.4V118M433.36 116.4V118M435.73 116.4V118M438.09 116.4V118M440.45 115V118M442.81 116.4V118M445.17 116.4V118M447.54 116.4V118M452.26 116.4V118M454.62 116.4V118M456.99 116.4V118M459.35 115V118M461.71 116.4V118M464.07 116.4V118M466.44 116.4V118M471.16 116.4V118M473.52 116.4V118M475.89 116.4V118M478.25 115V118M480.61 116.4V118M482.98 116.4V118M485.34 116.4V118M490.06 116.4V118M492.42 116.4V118M494.79 116.4V118M497.15 115V118M499.51 116.4V118M501.88 116.4V118M504.24 116.4V118M508.96 116.4V118M511.32 116.4V118M513.69 116.4V118M516.05 115V118M518.41 116.4V118M520.77 116.4V118M523.14 116.4V118M527.86 116.4V118M530.23 116.4V118M532.59 116.4V118M534.95 115V118M537.31 116.4V118M539.67 116.4V118M542.04 116.4V118M546.76 116.4V118M549.12 116.4V118M551.49 116.4V118M553.85 115V118M556.21 116.4V118M558.57 116.4V118M560.94 116.4V118M565.66 116.4V118M568.02 116.4V118M570.39 116.4V118M572.75 115V118M575.11 116.4V118M577.48 116.4V118M579.84 116.4V118M584.56 116.4V118M586.92 116.4V118M589.29 116.4V118M591.65 115V118M594.01 116.4V118M596.37 116.4V118M598.74 116.4V118M603.46 116.4V118M605.82 116.4V118M608.19 116.4V118M610.55 115V118M612.91 116.4V118M615.27 116.4V118M617.64 116.4V118M622.36 116.4V118M624.72 116.4V118M627.09 116.4V118M629.45 115V118M631.81 116.4V118M634.17 116.4V118M636.54 116.4V118M641.26 116.4V118M643.62 116.4V118M645.99 116.4V118M648.35 115V118M650.71 116.4V118M653.07 116.4V118M655.44 116.4V118M660.16 116.4V118M662.52 116.4V118M664.89 116.4V118M667.25 115V118M669.61 116.4V118M671.97 116.4V118M674.34 116.4V118M679.06 116.4V118M681.42 116.4V118M683.79 116.4V118M686.15 115V118M688.51 116.4V118M690.87 116.4V118M693.24 116.4V118M697.96 116.4V118M700.32 116.4V118M702.69 116.4V118M705.05 115V118M707.41 116.4V118M709.77 116.4V118M712.14 116.4V118M716.86 116.4V118M719.22 116.4V118M721.59 116.4V118M723.95 115V118M726.31 116.4V118M728.67 116.4V118M731.04 116.4V118M735.76 116.4V118M738.12 116.4V118M740.49 116.4V118M742.85 115V118M745.21 116.4V118M747.57 116.4V118M749.94 116.4V118M754.66 116.4V118M757.02 116.4V118M759.39 116.4V118M761.75 115V118M764.11 116.4V118M766.47 116.4V118M768.84 116.4V118M773.56 116.4V118M775.92 116.4V118M778.29 116.4V118M780.65 115V118M783.01 116.4V118M785.37 116.4V118M787.74 116.4V118M792.46 116.4V118M794.82 116.4V118M797.19 116.4V118M799.55 115V118M801.91 116.4V118M804.27 116.4V118M806.64 116.4V118M811.36 116.4V118M813.72 116.4V118M816.09 116.4V118M818.45 115V118M820.81 116.4V118M823.17 116.4V118M825.54 116.4V118M830.26 116.4V118M832.62 116.4V118M834.99 116.4V118M837.35 115V118M839.71 116.4V118M842.07 116.4V118M844.44 116.4V118M849.16 116.4V118M851.52 116.4V118M853.89 116.4V118M856.25 115V118M858.61 116.4V118M860.97 116.4V118M863.34 116.4V118M868.06 116.4V118M870.42 116.4V118M872.79 116.4V118M875.15 115V118M877.51 116.4V118M879.87 116.4V118M882.24 116.4V118M886.96 116.4V118M889.32 116.4V118M891.69 116.4V118M894.05 115V118M896.41 116.4V118M898.77 116.4V118M901.14 116.4V118M905.86 116.4V118M908.22 116.4V118M910.59 116.4V118M912.95 115V118M915.31 116.4V118M917.67 116.4V118M920.04 116.4V118M924.76 116.4V118M927.12 116.4V118M929.49 116.4V118M931.85 115V118M934.21 116.4V118M936.57 116.4V118M938.94 116.4V118M943.66 116.4V118M946.02 116.4V118M948.39 116.4V118M950.75 115V118M953.11 116.4V118M955.47 116.4V118" stroke="#c9c9c9" stroke-width="0.7" fill="none"/><path d="M926.2 102V118" stroke="#a9a9a9" stroke-width="0.7"/></svg>
<span class="t" style="left:68.606859375px;top:99.9px;height:16px;line-height:16px;font-size:7.9px;color:#707070;">60</span>
<span class="t" style="left:125.30685937499999px;top:99.9px;height:16px;line-height:16px;font-size:7.9px;color:#707070;">66</span>
<span class="t" style="left:182.006859375px;top:99.9px;height:16px;line-height:16px;font-size:7.9px;color:#707070;">72</span>
<span class="t" style="left:238.706859375px;top:99.9px;height:16px;line-height:16px;font-size:7.9px;color:#707070;">78</span>
<span class="t" style="left:295.406859375px;top:99.9px;height:16px;line-height:16px;font-size:7.9px;color:#707070;">84</span>
<span class="t" style="left:352.106859375px;top:99.9px;height:16px;line-height:16px;font-size:7.9px;color:#707070;">90</span>
<span class="t" style="left:408.80685937500004px;top:99.9px;height:16px;line-height:16px;font-size:7.9px;color:#707070;">96</span>
<span class="t" style="left:463.3102890625px;top:99.9px;height:16px;line-height:16px;font-size:7.9px;color:#707070;">102</span>
<span class="t" style="left:520.0102890625001px;top:99.9px;height:16px;line-height:16px;font-size:7.9px;color:#707070;">108</span>
<span class="t" style="left:577.003453125px;top:99.9px;height:16px;line-height:16px;font-size:7.9px;color:#707070;">114</span>
<span class="t" style="left:633.4102890625px;top:99.9px;height:16px;line-height:16px;font-size:7.9px;color:#707070;">120</span>
<span class="t" style="left:690.1102890625px;top:99.9px;height:16px;line-height:16px;font-size:7.9px;color:#707070;">126</span>
<span class="t" style="left:746.8102890625px;top:99.9px;height:16px;line-height:16px;font-size:7.9px;color:#707070;">132</span>
<span class="t" style="left:803.5102890625px;top:99.9px;height:16px;line-height:16px;font-size:7.9px;color:#707070;">138</span>
<span class="t" style="left:860.2102890625px;top:99.9px;height:16px;line-height:16px;font-size:7.9px;color:#707070;">144</span>
<span class="t" style="left:916.8px;top:99.9px;height:16px;line-height:16px;font-size:7.9px;color:#8a8a8a;transform:scaleX(0.9988);transform-origin:0 50%;">millimeters</span>
<svg style="left:20px;top:118px;" width="17" height="478" viewBox="20 118 17 478"><path d="M31.4 127.30H36.8M31.4 146.20H36.8M31.4 165.10H36.8M31.4 184.00H36.8M31.4 202.90H36.8M31.4 221.80H36.8M31.4 240.70H36.8M31.4 259.60H36.8M31.4 278.50H36.8M31.4 297.40H36.8M31.4 316.30H36.8M31.4 335.20H36.8M31.4 354.10H36.8M31.4 373.00H36.8M31.4 391.90H36.8M31.4 410.80H36.8M31.4 429.70H36.8M31.4 448.60H36.8M31.4 467.50H36.8M31.4 486.40H36.8M31.4 505.30H36.8M31.4 524.20H36.8M31.4 543.10H36.8M31.4 562.00H36.8M31.4 580.90H36.8" stroke="#b9b9b9" stroke-width="0.8" fill="none"/><path d="M35.2 120.21H36.8M35.2 122.58H36.8M35.2 124.94H36.8M35.2 129.66H36.8M35.2 132.03H36.8M35.2 134.39H36.8M33.8 136.75H36.8M35.2 139.11H36.8M35.2 141.48H36.8M35.2 143.84H36.8M35.2 148.56H36.8M35.2 150.93H36.8M35.2 153.29H36.8M33.8 155.65H36.8M35.2 158.01H36.8M35.2 160.38H36.8M35.2 162.74H36.8M35.2 167.46H36.8M35.2 169.83H36.8M35.2 172.19H36.8M33.8 174.55H36.8M35.2 176.91H36.8M35.2 179.28H36.8M35.2 181.64H36.8M35.2 186.36H36.8M35.2 188.73H36.8M35.2 191.09H36.8M33.8 193.45H36.8M35.2 195.81H36.8M35.2 198.18H36.8M35.2 200.54H36.8M35.2 205.26H36.8M35.2 207.63H36.8M35.2 209.99H36.8M33.8 212.35H36.8M35.2 214.71H36.8M35.2 217.08H36.8M35.2 219.44H36.8M35.2 224.16H36.8M35.2 226.53H36.8M35.2 228.89H36.8M33.8 231.25H36.8M35.2 233.61H36.8M35.2 235.98H36.8M35.2 238.34H36.8M35.2 243.06H36.8M35.2 245.43H36.8M35.2 247.79H36.8M33.8 250.15H36.8M35.2 252.51H36.8M35.2 254.88H36.8M35.2 257.24H36.8M35.2 261.96H36.8M35.2 264.33H36.8M35.2 266.69H36.8M33.8 269.05H36.8M35.2 271.41H36.8M35.2 273.78H36.8M35.2 276.14H36.8M35.2 280.86H36.8M35.2 283.23H36.8M35.2 285.59H36.8M33.8 287.95H36.8M35.2 290.31H36.8M35.2 292.68H36.8M35.2 295.04H36.8M35.2 299.76H36.8M35.2 302.12H36.8M35.2 304.49H36.8M33.8 306.85H36.8M35.2 309.21H36.8M35.2 311.58H36.8M35.2 313.94H36.8M35.2 318.66H36.8M35.2 321.03H36.8M35.2 323.39H36.8M33.8 325.75H36.8M35.2 328.11H36.8M35.2 330.48H36.8M35.2 332.84H36.8M35.2 337.56H36.8M35.2 339.93H36.8M35.2 342.29H36.8M33.8 344.65H36.8M35.2 347.01H36.8M35.2 349.38H36.8M35.2 351.74H36.8M35.2 356.46H36.8M35.2 358.83H36.8M35.2 361.19H36.8M33.8 363.55H36.8M35.2 365.91H36.8M35.2 368.28H36.8M35.2 370.64H36.8M35.2 375.36H36.8M35.2 377.73H36.8M35.2 380.09H36.8M33.8 382.45H36.8M35.2 384.81H36.8M35.2 387.18H36.8M35.2 389.54H36.8M35.2 394.26H36.8M35.2 396.62H36.8M35.2 398.99H36.8M33.8 401.35H36.8M35.2 403.71H36.8M35.2 406.08H36.8M35.2 408.44H36.8M35.2 413.16H36.8M35.2 415.53H36.8M35.2 417.89H36.8M33.8 420.25H36.8M35.2 422.61H36.8M35.2 424.98H36.8M35.2 427.34H36.8M35.2 432.06H36.8M35.2 434.43H36.8M35.2 436.79H36.8M33.8 439.15H36.8M35.2 441.51H36.8M35.2 443.88H36.8M35.2 446.24H36.8M35.2 450.96H36.8M35.2 453.33H36.8M35.2 455.69H36.8M33.8 458.05H36.8M35.2 460.41H36.8M35.2 462.78H36.8M35.2 465.14H36.8M35.2 469.86H36.8M35.2 472.23H36.8M35.2 474.59H36.8M33.8 476.95H36.8M35.2 479.31H36.8M35.2 481.68H36.8M35.2 484.04H36.8M35.2 488.76H36.8M35.2 491.12H36.8M35.2 493.49H36.8M33.8 495.85H36.8M35.2 498.21H36.8M35.2 500.58H36.8M35.2 502.94H36.8M35.2 507.66H36.8M35.2 510.02H36.8M35.2 512.39H36.8M33.8 514.75H36.8M35.2 517.11H36.8M35.2 519.48H36.8M35.2 521.84H36.8M35.2 526.56H36.8M35.2 528.92H36.8M35.2 531.29H36.8M33.8 533.65H36.8M35.2 536.01H36.8M35.2 538.38H36.8M35.2 540.74H36.8M35.2 545.46H36.8M35.2 547.83H36.8M35.2 550.19H36.8M33.8 552.55H36.8M35.2 554.91H36.8M35.2 557.27H36.8M35.2 559.64H36.8M35.2 564.36H36.8M35.2 566.73H36.8M35.2 569.09H36.8M33.8 571.45H36.8M35.2 573.81H36.8M35.2 576.17H36.8M35.2 578.54H36.8M35.2 583.26H36.8M35.2 585.62H36.8M35.2 587.99H36.8M33.8 590.35H36.8M35.2 592.71H36.8" stroke="#c9c9c9" stroke-width="0.7" fill="none"/></svg>
<span class="t" style="left:23.61px;top:118.30px;height:16px;line-height:16px;font-size:7.9px;color:#707070;transform:rotate(-90deg);transform-origin:50% 50%;">180</span>
<span class="t" style="left:23.61px;top:175.00px;height:16px;line-height:16px;font-size:7.9px;color:#707070;transform:rotate(-90deg);transform-origin:50% 50%;">174</span>
<span class="t" style="left:23.61px;top:231.70px;height:16px;line-height:16px;font-size:7.9px;color:#707070;transform:rotate(-90deg);transform-origin:50% 50%;">168</span>
<span class="t" style="left:23.61px;top:288.40px;height:16px;line-height:16px;font-size:7.9px;color:#707070;transform:rotate(-90deg);transform-origin:50% 50%;">162</span>
<span class="t" style="left:23.61px;top:345.10px;height:16px;line-height:16px;font-size:7.9px;color:#707070;transform:rotate(-90deg);transform-origin:50% 50%;">156</span>
<span class="t" style="left:23.61px;top:401.80px;height:16px;line-height:16px;font-size:7.9px;color:#707070;transform:rotate(-90deg);transform-origin:50% 50%;">150</span>
<span class="t" style="left:23.61px;top:458.50px;height:16px;line-height:16px;font-size:7.9px;color:#707070;transform:rotate(-90deg);transform-origin:50% 50%;">144</span>
<span class="t" style="left:23.61px;top:515.20px;height:16px;line-height:16px;font-size:7.9px;color:#707070;transform:rotate(-90deg);transform-origin:50% 50%;">138</span>
<span class="t" style="left:11.33px;top:580.5px;height:16px;line-height:16px;font-size:7.9px;color:#8a8a8a;transform:rotate(-90deg) scaleX(0.999);transform-origin:50% 50%;">millimeters</span>
<div style="left:37px;top:118px;width:908px;height:478px;background:#ffffff;"></div>
<svg style="left:37px;top:118px;" width="908" height="478" viewBox="37 118 908 478"><g transform="translate(522.3 353.5)"><path d="M9.9 -140.95 A141.3 141.3 0 1 1 -9.9 -140.95 A14.0 14.0 0 1 1 9.9 -140.95 Z" fill="none" stroke="#dc6660" stroke-width="1"/><circle cx="0" cy="-151.5" r="7.2" fill="none" stroke="#dc6660" stroke-width="1"/><circle r="131.3" fill="#231f20"/><circle r="89.4" fill="#fff"/><g transform="rotate(0.0)"><path d="M0 -104.9 Q2.4 -107.3 5.2 -107 C8.4 -106.7 9.7 -104.4 9.7 -100.8 C9.7 -96 9 -92.6 7.3 -90.2 C5.6 -87.8 3 -84.8 0 -84.8 C-3 -84.8 -5.6 -87.8 -7.3 -90.2 C-9 -92.6 -9.7 -96 -9.7 -100.8 C-9.7 -104.4 -8.4 -106.7 -5.2 -107 Q-2.4 -107.3 0 -104.9 Z" fill="none" stroke="#231f20" stroke-width="14.6" stroke-linejoin="round"/><path d="M-15 -97 L-16 -89 L-6.6 -80.3 H6.6 L16 -89 L15 -97 Z" fill="#231f20" stroke="#231f20" stroke-width="5" stroke-linejoin="miter"/></g><g transform="rotate(22.5)"><path d="M0 -104.9 Q2.4 -107.3 5.2 -107 C8.4 -106.7 9.7 -104.4 9.7 -100.8 C9.7 -96 9 -92.6 7.3 -90.2 C5.6 -87.8 3 -84.8 0 -84.8 C-3 -84.8 -5.6 -87.8 -7.3 -90.2 C-9 -92.6 -9.7 -96 -9.7 -100.8 C-9.7 -104.4 -8.4 -106.7 -5.2 -107 Q-2.4 -107.3 0 -104.9 Z" fill="none" stroke="#231f20" stroke-width="14.6" stroke-linejoin="round"/><path d="M-15 -97 L-16 -89 L-6.6 -80.3 H6.6 L16 -89 L15 -97 Z" fill="#231f20" stroke="#231f20" stroke-width="5" stroke-linejoin="miter"/></g><g transform="rotate(45.0)"><path d="M0 -104.9 Q2.4 -107.3 5.2 -107 C8.4 -106.7 9.7 -104.4 9.7 -100.8 C9.7 -96 9 -92.6 7.3 -90.2 C5.6 -87.8 3 -84.8 0 -84.8 C-3 -84.8 -5.6 -87.8 -7.3 -90.2 C-9 -92.6 -9.7 -96 -9.7 -100.8 C-9.7 -104.4 -8.4 -106.7 -5.2 -107 Q-2.4 -107.3 0 -104.9 Z" fill="none" stroke="#231f20" stroke-width="14.6" stroke-linejoin="round"/><path d="M-15 -97 L-16 -89 L-6.6 -80.3 H6.6 L16 -89 L15 -97 Z" fill="#231f20" stroke="#231f20" stroke-width="5" stroke-linejoin="miter"/></g><g transform="rotate(67.5)"><path d="M0 -104.9 Q2.4 -107.3 5.2 -107 C8.4 -106.7 9.7 -104.4 9.7 -100.8 C9.7 -96 9 -92.6 7.3 -90.2 C5.6 -87.8 3 -84.8 0 -84.8 C-3 -84.8 -5.6 -87.8 -7.3 -90.2 C-9 -92.6 -9.7 -96 -9.7 -100.8 C-9.7 -104.4 -8.4 -106.7 -5.2 -107 Q-2.4 -107.3 0 -104.9 Z" fill="none" stroke="#231f20" stroke-width="14.6" stroke-linejoin="round"/><path d="M-15 -97 L-16 -89 L-6.6 -80.3 H6.6 L16 -89 L15 -97 Z" fill="#231f20" stroke="#231f20" stroke-width="5" stroke-linejoin="miter"/></g><g transform="rotate(90.0)"><path d="M0 -104.9 Q2.4 -107.3 5.2 -107 C8.4 -106.7 9.7 -104.4 9.7 -100.8 C9.7 -96 9 -92.6 7.3 -90.2 C5.6 -87.8 3 -84.8 0 -84.8 C-3 -84.8 -5.6 -87.8 -7.3 -90.2 C-9 -92.6 -9.7 -96 -9.7 -100.8 C-9.7 -104.4 -8.4 -106.7 -5.2 -107 Q-2.4 -107.3 0 -104.9 Z" fill="none" stroke="#231f20" stroke-width="14.6" stroke-linejoin="round"/><path d="M-15 -97 L-16 -89 L-6.6 -80.3 H6.6 L16 -89 L15 -97 Z" fill="#231f20" stroke="#231f20" stroke-width="5" stroke-linejoin="miter"/></g><g transform="rotate(112.5)"><path d="M0 -104.9 Q2.4 -107.3 5.2 -107 C8.4 -106.7 9.7 -104.4 9.7 -100.8 C9.7 -96 9 -92.6 7.3 -90.2 C5.6 -87.8 3 -84.8 0 -84.8 C-3 -84.8 -5.6 -87.8 -7.3 -90.2 C-9 -92.6 -9.7 -96 -9.7 -100.8 C-9.7 -104.4 -8.4 -106.7 -5.2 -107 Q-2.4 -107.3 0 -104.9 Z" fill="none" stroke="#231f20" stroke-width="14.6" stroke-linejoin="round"/><path d="M-15 -97 L-16 -89 L-6.6 -80.3 H6.6 L16 -89 L15 -97 Z" fill="#231f20" stroke="#231f20" stroke-width="5" stroke-linejoin="miter"/></g><g transform="rotate(135.0)"><path d="M0 -104.9 Q2.4 -107.3 5.2 -107 C8.4 -106.7 9.7 -104.4 9.7 -100.8 C9.7 -96 9 -92.6 7.3 -90.2 C5.6 -87.8 3 -84.8 0 -84.8 C-3 -84.8 -5.6 -87.8 -7.3 -90.2 C-9 -92.6 -9.7 -96 -9.7 -100.8 C-9.7 -104.4 -8.4 -106.7 -5.2 -107 Q-2.4 -107.3 0 -104.9 Z" fill="none" stroke="#231f20" stroke-width="14.6" stroke-linejoin="round"/><path d="M-15 -97 L-16 -89 L-6.6 -80.3 H6.6 L16 -89 L15 -97 Z" fill="#231f20" stroke="#231f20" stroke-width="5" stroke-linejoin="miter"/></g><g transform="rotate(157.5)"><path d="M0 -104.9 Q2.4 -107.3 5.2 -107 C8.4 -106.7 9.7 -104.4 9.7 -100.8 C9.7 -96 9 -92.6 7.3 -90.2 C5.6 -87.8 3 -84.8 0 -84.8 C-3 -84.8 -5.6 -87.8 -7.3 -90.2 C-9 -92.6 -9.7 -96 -9.7 -100.8 C-9.7 -104.4 -8.4 -106.7 -5.2 -107 Q-2.4 -107.3 0 -104.9 Z" fill="none" stroke="#231f20" stroke-width="14.6" stroke-linejoin="round"/><path d="M-15 -97 L-16 -89 L-6.6 -80.3 H6.6 L16 -89 L15 -97 Z" fill="#231f20" stroke="#231f20" stroke-width="5" stroke-linejoin="miter"/></g><g transform="rotate(180.0)"><path d="M0 -104.9 Q2.4 -107.3 5.2 -107 C8.4 -106.7 9.7 -104.4 9.7 -100.8 C9.7 -96 9 -92.6 7.3 -90.2 C5.6 -87.8 3 -84.8 0 -84.8 C-3 -84.8 -5.6 -87.8 -7.3 -90.2 C-9 -92.6 -9.7 -96 -9.7 -100.8 C-9.7 -104.4 -8.4 -106.7 -5.2 -107 Q-2.4 -107.3 0 -104.9 Z" fill="none" stroke="#231f20" stroke-width="14.6" stroke-linejoin="round"/><path d="M-15 -97 L-16 -89 L-6.6 -80.3 H6.6 L16 -89 L15 -97 Z" fill="#231f20" stroke="#231f20" stroke-width="5" stroke-linejoin="miter"/></g><g transform="rotate(202.5)"><path d="M0 -104.9 Q2.4 -107.3 5.2 -107 C8.4 -106.7 9.7 -104.4 9.7 -100.8 C9.7 -96 9 -92.6 7.3 -90.2 C5.6 -87.8 3 -84.8 0 -84.8 C-3 -84.8 -5.6 -87.8 -7.3 -90.2 C-9 -92.6 -9.7 -96 -9.7 -100.8 C-9.7 -104.4 -8.4 -106.7 -5.2 -107 Q-2.4 -107.3 0 -104.9 Z" fill="none" stroke="#231f20" stroke-width="14.6" stroke-linejoin="round"/><path d="M-15 -97 L-16 -89 L-6.6 -80.3 H6.6 L16 -89 L15 -97 Z" fill="#231f20" stroke="#231f20" stroke-width="5" stroke-linejoin="miter"/></g><g transform="rotate(225.0)"><path d="M0 -104.9 Q2.4 -107.3 5.2 -107 C8.4 -106.7 9.7 -104.4 9.7 -100.8 C9.7 -96 9 -92.6 7.3 -90.2 C5.6 -87.8 3 -84.8 0 -84.8 C-3 -84.8 -5.6 -87.8 -7.3 -90.2 C-9 -92.6 -9.7 -96 -9.7 -100.8 C-9.7 -104.4 -8.4 -106.7 -5.2 -107 Q-2.4 -107.3 0 -104.9 Z" fill="none" stroke="#231f20" stroke-width="14.6" stroke-linejoin="round"/><path d="M-15 -97 L-16 -89 L-6.6 -80.3 H6.6 L16 -89 L15 -97 Z" fill="#231f20" stroke="#231f20" stroke-width="5" stroke-linejoin="miter"/></g><g transform="rotate(247.5)"><path d="M0 -104.9 Q2.4 -107.3 5.2 -107 C8.4 -106.7 9.7 -104.4 9.7 -100.8 C9.7 -96 9 -92.6 7.3 -90.2 C5.6 -87.8 3 -84.8 0 -84.8 C-3 -84.8 -5.6 -87.8 -7.3 -90.2 C-9 -92.6 -9.7 -96 -9.7 -100.8 C-9.7 -104.4 -8.4 -106.7 -5.2 -107 Q-2.4 -107.3 0 -104.9 Z" fill="none" stroke="#231f20" stroke-width="14.6" stroke-linejoin="round"/><path d="M-15 -97 L-16 -89 L-6.6 -80.3 H6.6 L16 -89 L15 -97 Z" fill="#231f20" stroke="#231f20" stroke-width="5" stroke-linejoin="miter"/></g><g transform="rotate(270.0)"><path d="M0 -104.9 Q2.4 -107.3 5.2 -107 C8.4 -106.7 9.7 -104.4 9.7 -100.8 C9.7 -96 9 -92.6 7.3 -90.2 C5.6 -87.8 3 -84.8 0 -84.8 C-3 -84.8 -5.6 -87.8 -7.3 -90.2 C-9 -92.6 -9.7 -96 -9.7 -100.8 C-9.7 -104.4 -8.4 -106.7 -5.2 -107 Q-2.4 -107.3 0 -104.9 Z" fill="none" stroke="#231f20" stroke-width="14.6" stroke-linejoin="round"/><path d="M-15 -97 L-16 -89 L-6.6 -80.3 H6.6 L16 -89 L15 -97 Z" fill="#231f20" stroke="#231f20" stroke-width="5" stroke-linejoin="miter"/></g><g transform="rotate(292.5)"><path d="M0 -104.9 Q2.4 -107.3 5.2 -107 C8.4 -106.7 9.7 -104.4 9.7 -100.8 C9.7 -96 9 -92.6 7.3 -90.2 C5.6 -87.8 3 -84.8 0 -84.8 C-3 -84.8 -5.6 -87.8 -7.3 -90.2 C-9 -92.6 -9.7 -96 -9.7 -100.8 C-9.7 -104.4 -8.4 -106.7 -5.2 -107 Q-2.4 -107.3 0 -104.9 Z" fill="none" stroke="#231f20" stroke-width="14.6" stroke-linejoin="round"/><path d="M-15 -97 L-16 -89 L-6.6 -80.3 H6.6 L16 -89 L15 -97 Z" fill="#231f20" stroke="#231f20" stroke-width="5" stroke-linejoin="miter"/></g><g transform="rotate(315.0)"><path d="M0 -104.9 Q2.4 -107.3 5.2 -107 C8.4 -106.7 9.7 -104.4 9.7 -100.8 C9.7 -96 9 -92.6 7.3 -90.2 C5.6 -87.8 3 -84.8 0 -84.8 C-3 -84.8 -5.6 -87.8 -7.3 -90.2 C-9 -92.6 -9.7 -96 -9.7 -100.8 C-9.7 -104.4 -8.4 -106.7 -5.2 -107 Q-2.4 -107.3 0 -104.9 Z" fill="none" stroke="#231f20" stroke-width="14.6" stroke-linejoin="round"/><path d="M-15 -97 L-16 -89 L-6.6 -80.3 H6.6 L16 -89 L15 -97 Z" fill="#231f20" stroke="#231f20" stroke-width="5" stroke-linejoin="miter"/></g><g transform="rotate(337.5)"><path d="M0 -104.9 Q2.4 -107.3 5.2 -107 C8.4 -106.7 9.7 -104.4 9.7 -100.8 C9.7 -96 9 -92.6 7.3 -90.2 C5.6 -87.8 3 -84.8 0 -84.8 C-3 -84.8 -5.6 -87.8 -7.3 -90.2 C-9 -92.6 -9.7 -96 -9.7 -100.8 C-9.7 -104.4 -8.4 -106.7 -5.2 -107 Q-2.4 -107.3 0 -104.9 Z" fill="none" stroke="#231f20" stroke-width="14.6" stroke-linejoin="round"/><path d="M-15 -97 L-16 -89 L-6.6 -80.3 H6.6 L16 -89 L15 -97 Z" fill="#231f20" stroke="#231f20" stroke-width="5" stroke-linejoin="miter"/></g><g transform="rotate(0.0)"><path d="M12.60 -108.20 Q19.26 -111.42 23.14 -116.32 Q24.84 -110.31 29.77 -104.79" fill="none" stroke="#fff" stroke-width="3.3" stroke-linejoin="miter" stroke-miterlimit="3.2" stroke-linecap="round"/></g><g transform="rotate(22.5)"><path d="M12.60 -108.20 Q19.26 -111.42 23.14 -116.32 Q24.84 -110.31 29.77 -104.79" fill="none" stroke="#fff" stroke-width="3.3" stroke-linejoin="miter" stroke-miterlimit="3.2" stroke-linecap="round"/></g><g transform="rotate(45.0)"><path d="M12.60 -108.20 Q19.26 -111.42 23.14 -116.32 Q24.84 -110.31 29.77 -104.79" fill="none" stroke="#fff" stroke-width="3.3" stroke-linejoin="miter" stroke-miterlimit="3.2" stroke-linecap="round"/></g><g transform="rotate(67.5)"><path d="M12.60 -108.20 Q19.26 -111.42 23.14 -116.32 Q24.84 -110.31 29.77 -104.79" fill="none" stroke="#fff" stroke-width="3.3" stroke-linejoin="miter" stroke-miterlimit="3.2" stroke-linecap="round"/></g><g transform="rotate(90.0)"><path d="M12.60 -108.20 Q19.26 -111.42 23.14 -116.32 Q24.84 -110.31 29.77 -104.79" fill="none" stroke="#fff" stroke-width="3.3" stroke-linejoin="miter" stroke-miterlimit="3.2" stroke-linecap="round"/></g><g transform="rotate(112.5)"><path d="M12.60 -108.20 Q19.26 -111.42 23.14 -116.32 Q24.84 -110.31 29.77 -104.79" fill="none" stroke="#fff" stroke-width="3.3" stroke-linejoin="miter" stroke-miterlimit="3.2" stroke-linecap="round"/></g><g transform="rotate(135.0)"><path d="M12.60 -108.20 Q19.26 -111.42 23.14 -116.32 Q24.84 -110.31 29.77 -104.79" fill="none" stroke="#fff" stroke-width="3.3" stroke-linejoin="miter" stroke-miterlimit="3.2" stroke-linecap="round"/></g><g transform="rotate(157.5)"><path d="M12.60 -108.20 Q19.26 -111.42 23.14 -116.32 Q24.84 -110.31 29.77 -104.79" fill="none" stroke="#fff" stroke-width="3.3" stroke-linejoin="miter" stroke-miterlimit="3.2" stroke-linecap="round"/></g><g transform="rotate(180.0)"><path d="M12.60 -108.20 Q19.26 -111.42 23.14 -116.32 Q24.84 -110.31 29.77 -104.79" fill="none" stroke="#fff" stroke-width="3.3" stroke-linejoin="miter" stroke-miterlimit="3.2" stroke-linecap="round"/></g><g transform="rotate(202.5)"><path d="M12.60 -108.20 Q19.26 -111.42 23.14 -116.32 Q24.84 -110.31 29.77 -104.79" fill="none" stroke="#fff" stroke-width="3.3" stroke-linejoin="miter" stroke-miterlimit="3.2" stroke-linecap="round"/></g><g transform="rotate(225.0)"><path d="M12.60 -108.20 Q19.26 -111.42 23.14 -116.32 Q24.84 -110.31 29.77 -104.79" fill="none" stroke="#fff" stroke-width="3.3" stroke-linejoin="miter" stroke-miterlimit="3.2" stroke-linecap="round"/></g><g transform="rotate(247.5)"><path d="M12.60 -108.20 Q19.26 -111.42 23.14 -116.32 Q24.84 -110.31 29.77 -104.79" fill="none" stroke="#fff" stroke-width="3.3" stroke-linejoin="miter" stroke-miterlimit="3.2" stroke-linecap="round"/></g><g transform="rotate(270.0)"><path d="M12.60 -108.20 Q19.26 -111.42 23.14 -116.32 Q24.84 -110.31 29.77 -104.79" fill="none" stroke="#fff" stroke-width="3.3" stroke-linejoin="miter" stroke-miterlimit="3.2" stroke-linecap="round"/></g><g transform="rotate(292.5)"><path d="M12.60 -108.20 Q19.26 -111.42 23.14 -116.32 Q24.84 -110.31 29.77 -104.79" fill="none" stroke="#fff" stroke-width="3.3" stroke-linejoin="miter" stroke-miterlimit="3.2" stroke-linecap="round"/></g><g transform="rotate(315.0)"><path d="M12.60 -108.20 Q19.26 -111.42 23.14 -116.32 Q24.84 -110.31 29.77 -104.79" fill="none" stroke="#fff" stroke-width="3.3" stroke-linejoin="miter" stroke-miterlimit="3.2" stroke-linecap="round"/></g><g transform="rotate(337.5)"><path d="M12.60 -108.20 Q19.26 -111.42 23.14 -116.32 Q24.84 -110.31 29.77 -104.79" fill="none" stroke="#fff" stroke-width="3.3" stroke-linejoin="miter" stroke-miterlimit="3.2" stroke-linecap="round"/></g><g transform="rotate(0.0)"><path d="M0 -104.9 Q2.4 -107.3 5.2 -107 C8.4 -106.7 9.7 -104.4 9.7 -100.8 C9.7 -96 9 -92.6 7.3 -90.2 C5.6 -87.8 3 -84.8 0 -84.8 C-3 -84.8 -5.6 -87.8 -7.3 -90.2 C-9 -92.6 -9.7 -96 -9.7 -100.8 C-9.7 -104.4 -8.4 -106.7 -5.2 -107 Q-2.4 -107.3 0 -104.9 Z" fill="none" stroke="#fff" stroke-width="10.6" stroke-linejoin="round"/><path d="M-15 -97 L-16 -89 L-6.6 -80.3 H6.6 L16 -89 L15 -97 Z" fill="#fff"/><path d="M-2.6 -113.6 Q-0.6 -112.4 0 -110.3 Q0.6 -112.4 2.6 -113.6 Z" fill="#231f20"/>
<path d="M-7.3 -71.2 Q-6 -77.6 0 -81.6 Q6 -77.6 7.3 -71.2" fill="#fff" stroke="#231f20" stroke-width="6"/><path d="M-7.3 -71.2 Q-6 -77.6 0 -81.6 Q6 -77.6 7.3 -71.2" fill="none" stroke="#fff" stroke-width="1.9"/>
<path d="M0 -104.9 Q2.4 -107.3 5.2 -107 C8.4 -106.7 9.7 -104.4 9.7 -100.8 C9.7 -96 9 -92.6 7.3 -90.2 C5.6 -87.8 3 -84.8 0 -84.8 C-3 -84.8 -5.6 -87.8 -7.3 -90.2 C-9 -92.6 -9.7 -96 -9.7 -100.8 C-9.7 -104.4 -8.4 -106.7 -5.2 -107 Q-2.4 -107.3 0 -104.9 Z" fill="#fff" stroke="#231f20" stroke-width="3.2" stroke-linejoin="round"/>
<path d="M-4.6 -106 C-2 -106 -0.1 -104.6 -0.1 -102.8 C-0.1 -100.8 -1.5 -99.3 -3.2 -99.2 C-4.4 -99.2 -5.2 -99.6 -5.3 -100.4 M4.6 -106 C2 -106 0.1 -104.6 0.1 -102.8 C0.1 -100.8 1.5 -99.3 3.2 -99.2 C4.4 -99.2 5.2 -99.6 5.3 -100.4" fill="none" stroke="#231f20" stroke-width="2.2" stroke-linecap="round"/>
<circle cx="-5.1" cy="-100.7" r="1.45" fill="#231f20"/><circle cx="5.1" cy="-100.7" r="1.45" fill="#231f20"/></g><g transform="rotate(22.5)"><path d="M0 -104.9 Q2.4 -107.3 5.2 -107 C8.4 -106.7 9.7 -104.4 9.7 -100.8 C9.7 -96 9 -92.6 7.3 -90.2 C5.6 -87.8 3 -84.8 0 -84.8 C-3 -84.8 -5.6 -87.8 -7.3 -90.2 C-9 -92.6 -9.7 -96 -9.7 -100.8 C-9.7 -104.4 -8.4 -106.7 -5.2 -107 Q-2.4 -107.3 0 -104.9 Z" fill="none" stroke="#fff" stroke-width="10.6" stroke-linejoin="round"/><path d="M-15 -97 L-16 -89 L-6.6 -80.3 H6.6 L16 -89 L15 -97 Z" fill="#fff"/><path d="M-2.6 -113.6 Q-0.6 -112.4 0 -110.3 Q0.6 -112.4 2.6 -113.6 Z" fill="#231f20"/>
<path d="M-7.3 -71.2 Q-6 -77.6 0 -81.6 Q6 -77.6 7.3 -71.2" fill="#fff" stroke="#231f20" stroke-width="6"/><path d="M-7.3 -71.2 Q-6 -77.6 0 -81.6 Q6 -77.6 7.3 -71.2" fill="none" stroke="#fff" stroke-width="1.9"/>
<path d="M0 -104.9 Q2.4 -107.3 5.2 -107 C8.4 -106.7 9.7 -104.4 9.7 -100.8 C9.7 -96 9 -92.6 7.3 -90.2 C5.6 -87.8 3 -84.8 0 -84.8 C-3 -84.8 -5.6 -87.8 -7.3 -90.2 C-9 -92.6 -9.7 -96 -9.7 -100.8 C-9.7 -104.4 -8.4 -106.7 -5.2 -107 Q-2.4 -107.3 0 -104.9 Z" fill="#fff" stroke="#231f20" stroke-width="3.2" stroke-linejoin="round"/>
<path d="M-4.6 -106 C-2 -106 -0.1 -104.6 -0.1 -102.8 C-0.1 -100.8 -1.5 -99.3 -3.2 -99.2 C-4.4 -99.2 -5.2 -99.6 -5.3 -100.4 M4.6 -106 C2 -106 0.1 -104.6 0.1 -102.8 C0.1 -100.8 1.5 -99.3 3.2 -99.2 C4.4 -99.2 5.2 -99.6 5.3 -100.4" fill="none" stroke="#231f20" stroke-width="2.2" stroke-linecap="round"/>
<circle cx="-5.1" cy="-100.7" r="1.45" fill="#231f20"/><circle cx="5.1" cy="-100.7" r="1.45" fill="#231f20"/></g><g transform="rotate(45.0)"><path d="M0 -104.9 Q2.4 -107.3 5.2 -107 C8.4 -106.7 9.7 -104.4 9.7 -100.8 C9.7 -96 9 -92.6 7.3 -90.2 C5.6 -87.8 3 -84.8 0 -84.8 C-3 -84.8 -5.6 -87.8 -7.3 -90.2 C-9 -92.6 -9.7 -96 -9.7 -100.8 C-9.7 -104.4 -8.4 -106.7 -5.2 -107 Q-2.4 -107.3 0 -104.9 Z" fill="none" stroke="#fff" stroke-width="10.6" stroke-linejoin="round"/><path d="M-15 -97 L-16 -89 L-6.6 -80.3 H6.6 L16 -89 L15 -97 Z" fill="#fff"/><path d="M-2.6 -113.6 Q-0.6 -112.4 0 -110.3 Q0.6 -112.4 2.6 -113.6 Z" fill="#231f20"/>
<path d="M-7.3 -71.2 Q-6 -77.6 0 -81.6 Q6 -77.6 7.3 -71.2" fill="#fff" stroke="#231f20" stroke-width="6"/><path d="M-7.3 -71.2 Q-6 -77.6 0 -81.6 Q6 -77.6 7.3 -71.2" fill="none" stroke="#fff" stroke-width="1.9"/>
<path d="M0 -104.9 Q2.4 -107.3 5.2 -107 C8.4 -106.7 9.7 -104.4 9.7 -100.8 C9.7 -96 9 -92.6 7.3 -90.2 C5.6 -87.8 3 -84.8 0 -84.8 C-3 -84.8 -5.6 -87.8 -7.3 -90.2 C-9 -92.6 -9.7 -96 -9.7 -100.8 C-9.7 -104.4 -8.4 -106.7 -5.2 -107 Q-2.4 -107.3 0 -104.9 Z" fill="#fff" stroke="#231f20" stroke-width="3.2" stroke-linejoin="round"/>
<path d="M-4.6 -106 C-2 -106 -0.1 -104.6 -0.1 -102.8 C-0.1 -100.8 -1.5 -99.3 -3.2 -99.2 C-4.4 -99.2 -5.2 -99.6 -5.3 -100.4 M4.6 -106 C2 -106 0.1 -104.6 0.1 -102.8 C0.1 -100.8 1.5 -99.3 3.2 -99.2 C4.4 -99.2 5.2 -99.6 5.3 -100.4" fill="none" stroke="#231f20" stroke-width="2.2" stroke-linecap="round"/>
<circle cx="-5.1" cy="-100.7" r="1.45" fill="#231f20"/><circle cx="5.1" cy="-100.7" r="1.45" fill="#231f20"/></g><g transform="rotate(67.5)"><path d="M0 -104.9 Q2.4 -107.3 5.2 -107 C8.4 -106.7 9.7 -104.4 9.7 -100.8 C9.7 -96 9 -92.6 7.3 -90.2 C5.6 -87.8 3 -84.8 0 -84.8 C-3 -84.8 -5.6 -87.8 -7.3 -90.2 C-9 -92.6 -9.7 -96 -9.7 -100.8 C-9.7 -104.4 -8.4 -106.7 -5.2 -107 Q-2.4 -107.3 0 -104.9 Z" fill="none" stroke="#fff" stroke-width="10.6" stroke-linejoin="round"/><path d="M-15 -97 L-16 -89 L-6.6 -80.3 H6.6 L16 -89 L15 -97 Z" fill="#fff"/><path d="M-2.6 -113.6 Q-0.6 -112.4 0 -110.3 Q0.6 -112.4 2.6 -113.6 Z" fill="#231f20"/>
<path d="M-7.3 -71.2 Q-6 -77.6 0 -81.6 Q6 -77.6 7.3 -71.2" fill="#fff" stroke="#231f20" stroke-width="6"/><path d="M-7.3 -71.2 Q-6 -77.6 0 -81.6 Q6 -77.6 7.3 -71.2" fill="none" stroke="#fff" stroke-width="1.9"/>
<path d="M0 -104.9 Q2.4 -107.3 5.2 -107 C8.4 -106.7 9.7 -104.4 9.7 -100.8 C9.7 -96 9 -92.6 7.3 -90.2 C5.6 -87.8 3 -84.8 0 -84.8 C-3 -84.8 -5.6 -87.8 -7.3 -90.2 C-9 -92.6 -9.7 -96 -9.7 -100.8 C-9.7 -104.4 -8.4 -106.7 -5.2 -107 Q-2.4 -107.3 0 -104.9 Z" fill="#fff" stroke="#231f20" stroke-width="3.2" stroke-linejoin="round"/>
<path d="M-4.6 -106 C-2 -106 -0.1 -104.6 -0.1 -102.8 C-0.1 -100.8 -1.5 -99.3 -3.2 -99.2 C-4.4 -99.2 -5.2 -99.6 -5.3 -100.4 M4.6 -106 C2 -106 0.1 -104.6 0.1 -102.8 C0.1 -100.8 1.5 -99.3 3.2 -99.2 C4.4 -99.2 5.2 -99.6 5.3 -100.4" fill="none" stroke="#231f20" stroke-width="2.2" stroke-linecap="round"/>
<circle cx="-5.1" cy="-100.7" r="1.45" fill="#231f20"/><circle cx="5.1" cy="-100.7" r="1.45" fill="#231f20"/></g><g transform="rotate(90.0)"><path d="M0 -104.9 Q2.4 -107.3 5.2 -107 C8.4 -106.7 9.7 -104.4 9.7 -100.8 C9.7 -96 9 -92.6 7.3 -90.2 C5.6 -87.8 3 -84.8 0 -84.8 C-3 -84.8 -5.6 -87.8 -7.3 -90.2 C-9 -92.6 -9.7 -96 -9.7 -100.8 C-9.7 -104.4 -8.4 -106.7 -5.2 -107 Q-2.4 -107.3 0 -104.9 Z" fill="none" stroke="#fff" stroke-width="10.6" stroke-linejoin="round"/><path d="M-15 -97 L-16 -89 L-6.6 -80.3 H6.6 L16 -89 L15 -97 Z" fill="#fff"/><path d="M-2.6 -113.6 Q-0.6 -112.4 0 -110.3 Q0.6 -112.4 2.6 -113.6 Z" fill="#231f20"/>
<path d="M-7.3 -71.2 Q-6 -77.6 0 -81.6 Q6 -77.6 7.3 -71.2" fill="#fff" stroke="#231f20" stroke-width="6"/><path d="M-7.3 -71.2 Q-6 -77.6 0 -81.6 Q6 -77.6 7.3 -71.2" fill="none" stroke="#fff" stroke-width="1.9"/>
<path d="M0 -104.9 Q2.4 -107.3 5.2 -107 C8.4 -106.7 9.7 -104.4 9.7 -100.8 C9.7 -96 9 -92.6 7.3 -90.2 C5.6 -87.8 3 -84.8 0 -84.8 C-3 -84.8 -5.6 -87.8 -7.3 -90.2 C-9 -92.6 -9.7 -96 -9.7 -100.8 C-9.7 -104.4 -8.4 -106.7 -5.2 -107 Q-2.4 -107.3 0 -104.9 Z" fill="#fff" stroke="#231f20" stroke-width="3.2" stroke-linejoin="round"/>
<path d="M-4.6 -106 C-2 -106 -0.1 -104.6 -0.1 -102.8 C-0.1 -100.8 -1.5 -99.3 -3.2 -99.2 C-4.4 -99.2 -5.2 -99.6 -5.3 -100.4 M4.6 -106 C2 -106 0.1 -104.6 0.1 -102.8 C0.1 -100.8 1.5 -99.3 3.2 -99.2 C4.4 -99.2 5.2 -99.6 5.3 -100.4" fill="none" stroke="#231f20" stroke-width="2.2" stroke-linecap="round"/>
<circle cx="-5.1" cy="-100.7" r="1.45" fill="#231f20"/><circle cx="5.1" cy="-100.7" r="1.45" fill="#231f20"/></g><g transform="rotate(112.5)"><path d="M0 -104.9 Q2.4 -107.3 5.2 -107 C8.4 -106.7 9.7 -104.4 9.7 -100.8 C9.7 -96 9 -92.6 7.3 -90.2 C5.6 -87.8 3 -84.8 0 -84.8 C-3 -84.8 -5.6 -87.8 -7.3 -90.2 C-9 -92.6 -9.7 -96 -9.7 -100.8 C-9.7 -104.4 -8.4 -106.7 -5.2 -107 Q-2.4 -107.3 0 -104.9 Z" fill="none" stroke="#fff" stroke-width="10.6" stroke-linejoin="round"/><path d="M-15 -97 L-16 -89 L-6.6 -80.3 H6.6 L16 -89 L15 -97 Z" fill="#fff"/><path d="M-2.6 -113.6 Q-0.6 -112.4 0 -110.3 Q0.6 -112.4 2.6 -113.6 Z" fill="#231f20"/>
<path d="M-7.3 -71.2 Q-6 -77.6 0 -81.6 Q6 -77.6 7.3 -71.2" fill="#fff" stroke="#231f20" stroke-width="6"/><path d="M-7.3 -71.2 Q-6 -77.6 0 -81.6 Q6 -77.6 7.3 -71.2" fill="none" stroke="#fff" stroke-width="1.9"/>
<path d="M0 -104.9 Q2.4 -107.3 5.2 -107 C8.4 -106.7 9.7 -104.4 9.7 -100.8 C9.7 -96 9 -92.6 7.3 -90.2 C5.6 -87.8 3 -84.8 0 -84.8 C-3 -84.8 -5.6 -87.8 -7.3 -90.2 C-9 -92.6 -9.7 -96 -9.7 -100.8 C-9.7 -104.4 -8.4 -106.7 -5.2 -107 Q-2.4 -107.3 0 -104.9 Z" fill="#fff" stroke="#231f20" stroke-width="3.2" stroke-linejoin="round"/>
<path d="M-4.6 -106 C-2 -106 -0.1 -104.6 -0.1 -102.8 C-0.1 -100.8 -1.5 -99.3 -3.2 -99.2 C-4.4 -99.2 -5.2 -99.6 -5.3 -100.4 M4.6 -106 C2 -106 0.1 -104.6 0.1 -102.8 C0.1 -100.8 1.5 -99.3 3.2 -99.2 C4.4 -99.2 5.2 -99.6 5.3 -100.4" fill="none" stroke="#231f20" stroke-width="2.2" stroke-linecap="round"/>
<circle cx="-5.1" cy="-100.7" r="1.45" fill="#231f20"/><circle cx="5.1" cy="-100.7" r="1.45" fill="#231f20"/></g><g transform="rotate(135.0)"><path d="M0 -104.9 Q2.4 -107.3 5.2 -107 C8.4 -106.7 9.7 -104.4 9.7 -100.8 C9.7 -96 9 -92.6 7.3 -90.2 C5.6 -87.8 3 -84.8 0 -84.8 C-3 -84.8 -5.6 -87.8 -7.3 -90.2 C-9 -92.6 -9.7 -96 -9.7 -100.8 C-9.7 -104.4 -8.4 -106.7 -5.2 -107 Q-2.4 -107.3 0 -104.9 Z" fill="none" stroke="#fff" stroke-width="10.6" stroke-linejoin="round"/><path d="M-15 -97 L-16 -89 L-6.6 -80.3 H6.6 L16 -89 L15 -97 Z" fill="#fff"/><path d="M-2.6 -113.6 Q-0.6 -112.4 0 -110.3 Q0.6 -112.4 2.6 -113.6 Z" fill="#231f20"/>
<path d="M-7.3 -71.2 Q-6 -77.6 0 -81.6 Q6 -77.6 7.3 -71.2" fill="#fff" stroke="#231f20" stroke-width="6"/><path d="M-7.3 -71.2 Q-6 -77.6 0 -81.6 Q6 -77.6 7.3 -71.2" fill="none" stroke="#fff" stroke-width="1.9"/>
<path d="M0 -104.9 Q2.4 -107.3 5.2 -107 C8.4 -106.7 9.7 -104.4 9.7 -100.8 C9.7 -96 9 -92.6 7.3 -90.2 C5.6 -87.8 3 -84.8 0 -84.8 C-3 -84.8 -5.6 -87.8 -7.3 -90.2 C-9 -92.6 -9.7 -96 -9.7 -100.8 C-9.7 -104.4 -8.4 -106.7 -5.2 -107 Q-2.4 -107.3 0 -104.9 Z" fill="#fff" stroke="#231f20" stroke-width="3.2" stroke-linejoin="round"/>
<path d="M-4.6 -106 C-2 -106 -0.1 -104.6 -0.1 -102.8 C-0.1 -100.8 -1.5 -99.3 -3.2 -99.2 C-4.4 -99.2 -5.2 -99.6 -5.3 -100.4 M4.6 -106 C2 -106 0.1 -104.6 0.1 -102.8 C0.1 -100.8 1.5 -99.3 3.2 -99.2 C4.4 -99.2 5.2 -99.6 5.3 -100.4" fill="none" stroke="#231f20" stroke-width="2.2" stroke-linecap="round"/>
<circle cx="-5.1" cy="-100.7" r="1.45" fill="#231f20"/><circle cx="5.1" cy="-100.7" r="1.45" fill="#231f20"/></g><g transform="rotate(157.5)"><path d="M0 -104.9 Q2.4 -107.3 5.2 -107 C8.4 -106.7 9.7 -104.4 9.7 -100.8 C9.7 -96 9 -92.6 7.3 -90.2 C5.6 -87.8 3 -84.8 0 -84.8 C-3 -84.8 -5.6 -87.8 -7.3 -90.2 C-9 -92.6 -9.7 -96 -9.7 -100.8 C-9.7 -104.4 -8.4 -106.7 -5.2 -107 Q-2.4 -107.3 0 -104.9 Z" fill="none" stroke="#fff" stroke-width="10.6" stroke-linejoin="round"/><path d="M-15 -97 L-16 -89 L-6.6 -80.3 H6.6 L16 -89 L15 -97 Z" fill="#fff"/><path d="M-2.6 -113.6 Q-0.6 -112.4 0 -110.3 Q0.6 -112.4 2.6 -113.6 Z" fill="#231f20"/>
<path d="M-7.3 -71.2 Q-6 -77.6 0 -81.6 Q6 -77.6 7.3 -71.2" fill="#fff" stroke="#231f20" stroke-width="6"/><path d="M-7.3 -71.2 Q-6 -77.6 0 -81.6 Q6 -77.6 7.3 -71.2" fill="none" stroke="#fff" stroke-width="1.9"/>
<path d="M0 -104.9 Q2.4 -107.3 5.2 -107 C8.4 -106.7 9.7 -104.4 9.7 -100.8 C9.7 -96 9 -92.6 7.3 -90.2 C5.6 -87.8 3 -84.8 0 -84.8 C-3 -84.8 -5.6 -87.8 -7.3 -90.2 C-9 -92.6 -9.7 -96 -9.7 -100.8 C-9.7 -104.4 -8.4 -106.7 -5.2 -107 Q-2.4 -107.3 0 -104.9 Z" fill="#fff" stroke="#231f20" stroke-width="3.2" stroke-linejoin="round"/>
<path d="M-4.6 -106 C-2 -106 -0.1 -104.6 -0.1 -102.8 C-0.1 -100.8 -1.5 -99.3 -3.2 -99.2 C-4.4 -99.2 -5.2 -99.6 -5.3 -100.4 M4.6 -106 C2 -106 0.1 -104.6 0.1 -102.8 C0.1 -100.8 1.5 -99.3 3.2 -99.2 C4.4 -99.2 5.2 -99.6 5.3 -100.4" fill="none" stroke="#231f20" stroke-width="2.2" stroke-linecap="round"/>
<circle cx="-5.1" cy="-100.7" r="1.45" fill="#231f20"/><circle cx="5.1" cy="-100.7" r="1.45" fill="#231f20"/></g><g transform="rotate(180.0)"><path d="M0 -104.9 Q2.4 -107.3 5.2 -107 C8.4 -106.7 9.7 -104.4 9.7 -100.8 C9.7 -96 9 -92.6 7.3 -90.2 C5.6 -87.8 3 -84.8 0 -84.8 C-3 -84.8 -5.6 -87.8 -7.3 -90.2 C-9 -92.6 -9.7 -96 -9.7 -100.8 C-9.7 -104.4 -8.4 -106.7 -5.2 -107 Q-2.4 -107.3 0 -104.9 Z" fill="none" stroke="#fff" stroke-width="10.6" stroke-linejoin="round"/><path d="M-15 -97 L-16 -89 L-6.6 -80.3 H6.6 L16 -89 L15 -97 Z" fill="#fff"/><path d="M-2.6 -113.6 Q-0.6 -112.4 0 -110.3 Q0.6 -112.4 2.6 -113.6 Z" fill="#231f20"/>
<path d="M-7.3 -71.2 Q-6 -77.6 0 -81.6 Q6 -77.6 7.3 -71.2" fill="#fff" stroke="#231f20" stroke-width="6"/><path d="M-7.3 -71.2 Q-6 -77.6 0 -81.6 Q6 -77.6 7.3 -71.2" fill="none" stroke="#fff" stroke-width="1.9"/>
<path d="M0 -104.9 Q2.4 -107.3 5.2 -107 C8.4 -106.7 9.7 -104.4 9.7 -100.8 C9.7 -96 9 -92.6 7.3 -90.2 C5.6 -87.8 3 -84.8 0 -84.8 C-3 -84.8 -5.6 -87.8 -7.3 -90.2 C-9 -92.6 -9.7 -96 -9.7 -100.8 C-9.7 -104.4 -8.4 -106.7 -5.2 -107 Q-2.4 -107.3 0 -104.9 Z" fill="#fff" stroke="#231f20" stroke-width="3.2" stroke-linejoin="round"/>
<path d="M-4.6 -106 C-2 -106 -0.1 -104.6 -0.1 -102.8 C-0.1 -100.8 -1.5 -99.3 -3.2 -99.2 C-4.4 -99.2 -5.2 -99.6 -5.3 -100.4 M4.6 -106 C2 -106 0.1 -104.6 0.1 -102.8 C0.1 -100.8 1.5 -99.3 3.2 -99.2 C4.4 -99.2 5.2 -99.6 5.3 -100.4" fill="none" stroke="#231f20" stroke-width="2.2" stroke-linecap="round"/>
<circle cx="-5.1" cy="-100.7" r="1.45" fill="#231f20"/><circle cx="5.1" cy="-100.7" r="1.45" fill="#231f20"/></g><g transform="rotate(202.5)"><path d="M0 -104.9 Q2.4 -107.3 5.2 -107 C8.4 -106.7 9.7 -104.4 9.7 -100.8 C9.7 -96 9 -92.6 7.3 -90.2 C5.6 -87.8 3 -84.8 0 -84.8 C-3 -84.8 -5.6 -87.8 -7.3 -90.2 C-9 -92.6 -9.7 -96 -9.7 -100.8 C-9.7 -104.4 -8.4 -106.7 -5.2 -107 Q-2.4 -107.3 0 -104.9 Z" fill="none" stroke="#fff" stroke-width="10.6" stroke-linejoin="round"/><path d="M-15 -97 L-16 -89 L-6.6 -80.3 H6.6 L16 -89 L15 -97 Z" fill="#fff"/><path d="M-2.6 -113.6 Q-0.6 -112.4 0 -110.3 Q0.6 -112.4 2.6 -113.6 Z" fill="#231f20"/>
<path d="M-7.3 -71.2 Q-6 -77.6 0 -81.6 Q6 -77.6 7.3 -71.2" fill="#fff" stroke="#231f20" stroke-width="6"/><path d="M-7.3 -71.2 Q-6 -77.6 0 -81.6 Q6 -77.6 7.3 -71.2" fill="none" stroke="#fff" stroke-width="1.9"/>
<path d="M0 -104.9 Q2.4 -107.3 5.2 -107 C8.4 -106.7 9.7 -104.4 9.7 -100.8 C9.7 -96 9 -92.6 7.3 -90.2 C5.6 -87.8 3 -84.8 0 -84.8 C-3 -84.8 -5.6 -87.8 -7.3 -90.2 C-9 -92.6 -9.7 -96 -9.7 -100.8 C-9.7 -104.4 -8.4 -106.7 -5.2 -107 Q-2.4 -107.3 0 -104.9 Z" fill="#fff" stroke="#231f20" stroke-width="3.2" stroke-linejoin="round"/>
<path d="M-4.6 -106 C-2 -106 -0.1 -104.6 -0.1 -102.8 C-0.1 -100.8 -1.5 -99.3 -3.2 -99.2 C-4.4 -99.2 -5.2 -99.6 -5.3 -100.4 M4.6 -106 C2 -106 0.1 -104.6 0.1 -102.8 C0.1 -100.8 1.5 -99.3 3.2 -99.2 C4.4 -99.2 5.2 -99.6 5.3 -100.4" fill="none" stroke="#231f20" stroke-width="2.2" stroke-linecap="round"/>
<circle cx="-5.1" cy="-100.7" r="1.45" fill="#231f20"/><circle cx="5.1" cy="-100.7" r="1.45" fill="#231f20"/></g><g transform="rotate(225.0)"><path d="M0 -104.9 Q2.4 -107.3 5.2 -107 C8.4 -106.7 9.7 -104.4 9.7 -100.8 C9.7 -96 9 -92.6 7.3 -90.2 C5.6 -87.8 3 -84.8 0 -84.8 C-3 -84.8 -5.6 -87.8 -7.3 -90.2 C-9 -92.6 -9.7 -96 -9.7 -100.8 C-9.7 -104.4 -8.4 -106.7 -5.2 -107 Q-2.4 -107.3 0 -104.9 Z" fill="none" stroke="#fff" stroke-width="10.6" stroke-linejoin="round"/><path d="M-15 -97 L-16 -89 L-6.6 -80.3 H6.6 L16 -89 L15 -97 Z" fill="#fff"/><path d="M-2.6 -113.6 Q-0.6 -112.4 0 -110.3 Q0.6 -112.4 2.6 -113.6 Z" fill="#231f20"/>
<path d="M-7.3 -71.2 Q-6 -77.6 0 -81.6 Q6 -77.6 7.3 -71.2" fill="#fff" stroke="#231f20" stroke-width="6"/><path d="M-7.3 -71.2 Q-6 -77.6 0 -81.6 Q6 -77.6 7.3 -71.2" fill="none" stroke="#fff" stroke-width="1.9"/>
<path d="M0 -104.9 Q2.4 -107.3 5.2 -107 C8.4 -106.7 9.7 -104.4 9.7 -100.8 C9.7 -96 9 -92.6 7.3 -90.2 C5.6 -87.8 3 -84.8 0 -84.8 C-3 -84.8 -5.6 -87.8 -7.3 -90.2 C-9 -92.6 -9.7 -96 -9.7 -100.8 C-9.7 -104.4 -8.4 -106.7 -5.2 -107 Q-2.4 -107.3 0 -104.9 Z" fill="#fff" stroke="#231f20" stroke-width="3.2" stroke-linejoin="round"/>
<path d="M-4.6 -106 C-2 -106 -0.1 -104.6 -0.1 -102.8 C-0.1 -100.8 -1.5 -99.3 -3.2 -99.2 C-4.4 -99.2 -5.2 -99.6 -5.3 -100.4 M4.6 -106 C2 -106 0.1 -104.6 0.1 -102.8 C0.1 -100.8 1.5 -99.3 3.2 -99.2 C4.4 -99.2 5.2 -99.6 5.3 -100.4" fill="none" stroke="#231f20" stroke-width="2.2" stroke-linecap="round"/>
<circle cx="-5.1" cy="-100.7" r="1.45" fill="#231f20"/><circle cx="5.1" cy="-100.7" r="1.45" fill="#231f20"/></g><g transform="rotate(247.5)"><path d="M0 -104.9 Q2.4 -107.3 5.2 -107 C8.4 -106.7 9.7 -104.4 9.7 -100.8 C9.7 -96 9 -92.6 7.3 -90.2 C5.6 -87.8 3 -84.8 0 -84.8 C-3 -84.8 -5.6 -87.8 -7.3 -90.2 C-9 -92.6 -9.7 -96 -9.7 -100.8 C-9.7 -104.4 -8.4 -106.7 -5.2 -107 Q-2.4 -107.3 0 -104.9 Z" fill="none" stroke="#fff" stroke-width="10.6" stroke-linejoin="round"/><path d="M-15 -97 L-16 -89 L-6.6 -80.3 H6.6 L16 -89 L15 -97 Z" fill="#fff"/><path d="M-2.6 -113.6 Q-0.6 -112.4 0 -110.3 Q0.6 -112.4 2.6 -113.6 Z" fill="#231f20"/>
<path d="M-7.3 -71.2 Q-6 -77.6 0 -81.6 Q6 -77.6 7.3 -71.2" fill="#fff" stroke="#231f20" stroke-width="6"/><path d="M-7.3 -71.2 Q-6 -77.6 0 -81.6 Q6 -77.6 7.3 -71.2" fill="none" stroke="#fff" stroke-width="1.9"/>
<path d="M0 -104.9 Q2.4 -107.3 5.2 -107 C8.4 -106.7 9.7 -104.4 9.7 -100.8 C9.7 -96 9 -92.6 7.3 -90.2 C5.6 -87.8 3 -84.8 0 -84.8 C-3 -84.8 -5.6 -87.8 -7.3 -90.2 C-9 -92.6 -9.7 -96 -9.7 -100.8 C-9.7 -104.4 -8.4 -106.7 -5.2 -107 Q-2.4 -107.3 0 -104.9 Z" fill="#fff" stroke="#231f20" stroke-width="3.2" stroke-linejoin="round"/>
<path d="M-4.6 -106 C-2 -106 -0.1 -104.6 -0.1 -102.8 C-0.1 -100.8 -1.5 -99.3 -3.2 -99.2 C-4.4 -99.2 -5.2 -99.6 -5.3 -100.4 M4.6 -106 C2 -106 0.1 -104.6 0.1 -102.8 C0.1 -100.8 1.5 -99.3 3.2 -99.2 C4.4 -99.2 5.2 -99.6 5.3 -100.4" fill="none" stroke="#231f20" stroke-width="2.2" stroke-linecap="round"/>
<circle cx="-5.1" cy="-100.7" r="1.45" fill="#231f20"/><circle cx="5.1" cy="-100.7" r="1.45" fill="#231f20"/></g><g transform="rotate(270.0)"><path d="M0 -104.9 Q2.4 -107.3 5.2 -107 C8.4 -106.7 9.7 -104.4 9.7 -100.8 C9.7 -96 9 -92.6 7.3 -90.2 C5.6 -87.8 3 -84.8 0 -84.8 C-3 -84.8 -5.6 -87.8 -7.3 -90.2 C-9 -92.6 -9.7 -96 -9.7 -100.8 C-9.7 -104.4 -8.4 -106.7 -5.2 -107 Q-2.4 -107.3 0 -104.9 Z" fill="none" stroke="#fff" stroke-width="10.6" stroke-linejoin="round"/><path d="M-15 -97 L-16 -89 L-6.6 -80.3 H6.6 L16 -89 L15 -97 Z" fill="#fff"/><path d="M-2.6 -113.6 Q-0.6 -112.4 0 -110.3 Q0.6 -112.4 2.6 -113.6 Z" fill="#231f20"/>
<path d="M-7.3 -71.2 Q-6 -77.6 0 -81.6 Q6 -77.6 7.3 -71.2" fill="#fff" stroke="#231f20" stroke-width="6"/><path d="M-7.3 -71.2 Q-6 -77.6 0 -81.6 Q6 -77.6 7.3 -71.2" fill="none" stroke="#fff" stroke-width="1.9"/>
<path d="M0 -104.9 Q2.4 -107.3 5.2 -107 C8.4 -106.7 9.7 -104.4 9.7 -100.8 C9.7 -96 9 -92.6 7.3 -90.2 C5.6 -87.8 3 -84.8 0 -84.8 C-3 -84.8 -5.6 -87.8 -7.3 -90.2 C-9 -92.6 -9.7 -96 -9.7 -100.8 C-9.7 -104.4 -8.4 -106.7 -5.2 -107 Q-2.4 -107.3 0 -104.9 Z" fill="#fff" stroke="#231f20" stroke-width="3.2" stroke-linejoin="round"/>
<path d="M-4.6 -106 C-2 -106 -0.1 -104.6 -0.1 -102.8 C-0.1 -100.8 -1.5 -99.3 -3.2 -99.2 C-4.4 -99.2 -5.2 -99.6 -5.3 -100.4 M4.6 -106 C2 -106 0.1 -104.6 0.1 -102.8 C0.1 -100.8 1.5 -99.3 3.2 -99.2 C4.4 -99.2 5.2 -99.6 5.3 -100.4" fill="none" stroke="#231f20" stroke-width="2.2" stroke-linecap="round"/>
<circle cx="-5.1" cy="-100.7" r="1.45" fill="#231f20"/><circle cx="5.1" cy="-100.7" r="1.45" fill="#231f20"/></g><g transform="rotate(292.5)"><path d="M0 -104.9 Q2.4 -107.3 5.2 -107 C8.4 -106.7 9.7 -104.4 9.7 -100.8 C9.7 -96 9 -92.6 7.3 -90.2 C5.6 -87.8 3 -84.8 0 -84.8 C-3 -84.8 -5.6 -87.8 -7.3 -90.2 C-9 -92.6 -9.7 -96 -9.7 -100.8 C-9.7 -104.4 -8.4 -106.7 -5.2 -107 Q-2.4 -107.3 0 -104.9 Z" fill="none" stroke="#fff" stroke-width="10.6" stroke-linejoin="round"/><path d="M-15 -97 L-16 -89 L-6.6 -80.3 H6.6 L16 -89 L15 -97 Z" fill="#fff"/><path d="M-2.6 -113.6 Q-0.6 -112.4 0 -110.3 Q0.6 -112.4 2.6 -113.6 Z" fill="#231f20"/>
<path d="M-7.3 -71.2 Q-6 -77.6 0 -81.6 Q6 -77.6 7.3 -71.2" fill="#fff" stroke="#231f20" stroke-width="6"/><path d="M-7.3 -71.2 Q-6 -77.6 0 -81.6 Q6 -77.6 7.3 -71.2" fill="none" stroke="#fff" stroke-width="1.9"/>
<path d="M0 -104.9 Q2.4 -107.3 5.2 -107 C8.4 -106.7 9.7 -104.4 9.7 -100.8 C9.7 -96 9 -92.6 7.3 -90.2 C5.6 -87.8 3 -84.8 0 -84.8 C-3 -84.8 -5.6 -87.8 -7.3 -90.2 C-9 -92.6 -9.7 -96 -9.7 -100.8 C-9.7 -104.4 -8.4 -106.7 -5.2 -107 Q-2.4 -107.3 0 -104.9 Z" fill="#fff" stroke="#231f20" stroke-width="3.2" stroke-linejoin="round"/>
<path d="M-4.6 -106 C-2 -106 -0.1 -104.6 -0.1 -102.8 C-0.1 -100.8 -1.5 -99.3 -3.2 -99.2 C-4.4 -99.2 -5.2 -99.6 -5.3 -100.4 M4.6 -106 C2 -106 0.1 -104.6 0.1 -102.8 C0.1 -100.8 1.5 -99.3 3.2 -99.2 C4.4 -99.2 5.2 -99.6 5.3 -100.4" fill="none" stroke="#231f20" stroke-width="2.2" stroke-linecap="round"/>
<circle cx="-5.1" cy="-100.7" r="1.45" fill="#231f20"/><circle cx="5.1" cy="-100.7" r="1.45" fill="#231f20"/></g><g transform="rotate(315.0)"><path d="M0 -104.9 Q2.4 -107.3 5.2 -107 C8.4 -106.7 9.7 -104.4 9.7 -100.8 C9.7 -96 9 -92.6 7.3 -90.2 C5.6 -87.8 3 -84.8 0 -84.8 C-3 -84.8 -5.6 -87.8 -7.3 -90.2 C-9 -92.6 -9.7 -96 -9.7 -100.8 C-9.7 -104.4 -8.4 -106.7 -5.2 -107 Q-2.4 -107.3 0 -104.9 Z" fill="none" stroke="#fff" stroke-width="10.6" stroke-linejoin="round"/><path d="M-15 -97 L-16 -89 L-6.6 -80.3 H6.6 L16 -89 L15 -97 Z" fill="#fff"/><path d="M-2.6 -113.6 Q-0.6 -112.4 0 -110.3 Q0.6 -112.4 2.6 -113.6 Z" fill="#231f20"/>
<path d="M-7.3 -71.2 Q-6 -77.6 0 -81.6 Q6 -77.6 7.3 -71.2" fill="#fff" stroke="#231f20" stroke-width="6"/><path d="M-7.3 -71.2 Q-6 -77.6 0 -81.6 Q6 -77.6 7.3 -71.2" fill="none" stroke="#fff" stroke-width="1.9"/>
<path d="M0 -104.9 Q2.4 -107.3 5.2 -107 C8.4 -106.7 9.7 -104.4 9.7 -100.8 C9.7 -96 9 -92.6 7.3 -90.2 C5.6 -87.8 3 -84.8 0 -84.8 C-3 -84.8 -5.6 -87.8 -7.3 -90.2 C-9 -92.6 -9.7 -96 -9.7 -100.8 C-9.7 -104.4 -8.4 -106.7 -5.2 -107 Q-2.4 -107.3 0 -104.9 Z" fill="#fff" stroke="#231f20" stroke-width="3.2" stroke-linejoin="round"/>
<path d="M-4.6 -106 C-2 -106 -0.1 -104.6 -0.1 -102.8 C-0.1 -100.8 -1.5 -99.3 -3.2 -99.2 C-4.4 -99.2 -5.2 -99.6 -5.3 -100.4 M4.6 -106 C2 -106 0.1 -104.6 0.1 -102.8 C0.1 -100.8 1.5 -99.3 3.2 -99.2 C4.4 -99.2 5.2 -99.6 5.3 -100.4" fill="none" stroke="#231f20" stroke-width="2.2" stroke-linecap="round"/>
<circle cx="-5.1" cy="-100.7" r="1.45" fill="#231f20"/><circle cx="5.1" cy="-100.7" r="1.45" fill="#231f20"/></g><g transform="rotate(337.5)"><path d="M0 -104.9 Q2.4 -107.3 5.2 -107 C8.4 -106.7 9.7 -104.4 9.7 -100.8 C9.7 -96 9 -92.6 7.3 -90.2 C5.6 -87.8 3 -84.8 0 -84.8 C-3 -84.8 -5.6 -87.8 -7.3 -90.2 C-9 -92.6 -9.7 -96 -9.7 -100.8 C-9.7 -104.4 -8.4 -106.7 -5.2 -107 Q-2.4 -107.3 0 -104.9 Z" fill="none" stroke="#fff" stroke-width="10.6" stroke-linejoin="round"/><path d="M-15 -97 L-16 -89 L-6.6 -80.3 H6.6 L16 -89 L15 -97 Z" fill="#fff"/><path d="M-2.6 -113.6 Q-0.6 -112.4 0 -110.3 Q0.6 -112.4 2.6 -113.6 Z" fill="#231f20"/>
<path d="M-7.3 -71.2 Q-6 -77.6 0 -81.6 Q6 -77.6 7.3 -71.2" fill="#fff" stroke="#231f20" stroke-width="6"/><path d="M-7.3 -71.2 Q-6 -77.6 0 -81.6 Q6 -77.6 7.3 -71.2" fill="none" stroke="#fff" stroke-width="1.9"/>
<path d="M0 -104.9 Q2.4 -107.3 5.2 -107 C8.4 -106.7 9.7 -104.4 9.7 -100.8 C9.7 -96 9 -92.6 7.3 -90.2 C5.6 -87.8 3 -84.8 0 -84.8 C-3 -84.8 -5.6 -87.8 -7.3 -90.2 C-9 -92.6 -9.7 -96 -9.7 -100.8 C-9.7 -104.4 -8.4 -106.7 -5.2 -107 Q-2.4 -107.3 0 -104.9 Z" fill="#fff" stroke="#231f20" stroke-width="3.2" stroke-linejoin="round"/>
<path d="M-4.6 -106 C-2 -106 -0.1 -104.6 -0.1 -102.8 C-0.1 -100.8 -1.5 -99.3 -3.2 -99.2 C-4.4 -99.2 -5.2 -99.6 -5.3 -100.4 M4.6 -106 C2 -106 0.1 -104.6 0.1 -102.8 C0.1 -100.8 1.5 -99.3 3.2 -99.2 C4.4 -99.2 5.2 -99.6 5.3 -100.4" fill="none" stroke="#231f20" stroke-width="2.2" stroke-linecap="round"/>
<circle cx="-5.1" cy="-100.7" r="1.45" fill="#231f20"/><circle cx="5.1" cy="-100.7" r="1.45" fill="#231f20"/></g><circle r="71.9" fill="#fff" stroke="#231f20" stroke-width="1.5"/></g><rect x="377.1" y="184.60000000000002" width="2.4" height="2.4" fill="#111"/><rect x="521.0999999999999" y="184.60000000000002" width="2.4" height="2.4" fill="#111"/><rect x="665.0999999999999" y="184.60000000000002" width="2.4" height="2.4" fill="#111"/><rect x="377.1" y="340.40000000000003" width="2.4" height="2.4" fill="#111"/><rect x="665.0999999999999" y="340.40000000000003" width="2.4" height="2.4" fill="#111"/><rect x="377.1" y="496.1" width="2.4" height="2.4" fill="#111"/><rect x="521.0999999999999" y="496.1" width="2.4" height="2.4" fill="#111"/><rect x="665.0999999999999" y="496.1" width="2.4" height="2.4" fill="#111"/><rect x="521.9" y="341.4" width="1.4" height="1.4" fill="#333"/></svg>
<div style="left:958px;top:86px;width:226.5px;height:15.5px;background:#ebebeb;"></div>
<span class="t" style="left:960.8px;top:86px;height:16px;line-height:16px;font-size:9.3px;color:#3c3c3c;transform:scaleX(1.0050);transform-origin:0 50%;">Object Properties</span>
<svg style="left:1159px;top:90px;" width="9" height="8" viewBox="0 0 9 8"><path d="M0.8 0.8 L3.8 3.9 L0.8 7 Z M4.6 0.8 L7.6 3.9 L4.6 7 Z" fill="#b5b5b5"/></svg>
<svg style="left:1172px;top:89px;" width="9" height="9" viewBox="0 0 9 9"><path d="M1 1 L8 8 M8 1 L1 8" stroke="#8f8f8f" stroke-width="0.9"/></svg>
<div style="left:958px;top:101.5px;width:211px;height:20px;background:#ececec;"></div>
<div style="left:958px;top:101.2px;width:211px;height:0.8px;background:#d4d4d4;"></div>
<div style="left:958px;top:121px;width:211px;height:0.9px;background:#c8c8c8;"></div>
<div style="left:959.5px;top:102.2px;width:19px;height:18.8px;background:#ffffff;"></div>
<svg style="left:963px;top:105px;" width="11" height="13" viewBox="0 0 11 13"><path d="M5.4 1 L7.6 5.6 Q8 8 6.6 9.6 H4.2 Q2.8 8 3.2 5.6 Z" fill="#f4f6fb" stroke="#50547a" stroke-width="0.8"/><path d="M5.4 4 V8" stroke="#7b7fa5" stroke-width="0.6"/><rect x="3.2" y="10" width="4.4" height="1.6" fill="#15151f"/></svg>
<svg style="left:984px;top:104.5px;" width="13" height="13" viewBox="0 0 13 13"><path d="M5.6 1.4 L10.4 6.2 L6 10.8 L1.4 6.2 Z" fill="#fbfbfd" stroke="#4e4e66" stroke-width="0.8"/><path d="M2 6.4 H10 L6 10.4 Z" fill="#e8851c"/><path d="M10.4 6 Q12.2 8.4 11.2 10 Q10.2 9.6 10.4 6" fill="#e8851c"/><path d="M4 1 L6.4 3.6" stroke="#333" stroke-width="0.8"/></svg>
<svg style="left:1007px;top:105px;" width="11" height="13" viewBox="0 0 11 13"><path d="M2 1.2 H9 Q9 5.4 5.5 6 Q2 5.4 2 1.2 Z" fill="#fafbfd" stroke="#5d6082" stroke-width="0.8"/><path d="M5.5 6 V10.4" stroke="#222" stroke-width="1"/><path d="M3 10.8 H8" stroke="#111" stroke-width="1.2"/></svg>
<svg style="left:1028px;top:106px;" width="13" height="10" viewBox="0 0 13 10"><path d="M1 4 Q3.4 0.6 6 4.4 Q8.6 8.2 11.4 4.6" fill="none" stroke="#b9b9b9" stroke-width="0.9"/></svg>
<svg style="left:1050px;top:105px;" width="12" height="12" viewBox="0 0 12 12"><rect x="1.6" y="1.4" width="8.4" height="9" fill="#f1f2f8" stroke="#3b3f66" stroke-width="0.8" stroke-dasharray="2 1"/><g fill="#15152a"><rect x="0.6" y="0.6" width="1.8" height="1.8"/><rect x="9" y="0.6" width="1.8" height="1.8"/><rect x="0.6" y="9.4" width="1.8" height="1.8"/><rect x="9" y="9.4" width="1.8" height="1.8"/></g><path d="M4.6 4 Q4.8 2.8 6 2.9 Q7.2 3.1 7 4.4 Q6.8 5.2 5.9 5.8 V6.8 M5.9 8 V8.8" stroke="#15152a" stroke-width="0.9" fill="none"/></svg>
<div style="left:1128px;top:102.3px;width:18.4px;height:18.5px;background:#ffffff;"></div>
<div style="left:1149.6px;top:102.3px;width:18.7px;height:18.5px;background:#ffffff;"></div>
<svg style="left:1131.5px;top:106px;" width="12" height="10" viewBox="0 0 12 10"><path d="M1.2 8.6 V3 H2.6 V1.4 H5.6 V3 H6.6 V1.4 H9.6 V3 H10.6 V8.6 Z" fill="#fdfdfd" stroke="#4b4b58" stroke-width="0.8"/></svg>
<svg style="left:1153px;top:105px;" width="12" height="12" viewBox="0 0 12 12"><rect x="1.2" y="1.2" width="7.4" height="5.6" fill="#fafafc" stroke="#8e8ea6" stroke-width="0.7"/><ellipse cx="7.4" cy="7.8" rx="3.4" ry="1.9" fill="#fff" stroke="#555" stroke-width="0.7"/><ellipse cx="7.6" cy="7.8" rx="1.6" ry="1.5" fill="#222"/></svg>
<span class="t" style="left:960.3px;top:123.9px;height:16px;line-height:16px;font-size:9.6px;color:#111;font-weight:bold;transform:scaleX(0.9981);transform-origin:0 50%;">Outline</span>
<div style="left:1158.7px;top:128.8px;width:5.4px;height:5.4px;background:#fbfbfb;border:0.8px solid #d4d4d4;box-sizing:border-box;border-radius:1.2px;"></div>
<div style="left:1158.7px;top:150.3px;width:5.4px;height:5.4px;background:#fbfbfb;border:0.8px solid #d4d4d4;box-sizing:border-box;border-radius:1.2px;"></div>
<div style="left:1158.7px;top:172.3px;width:5.4px;height:5.4px;background:#fbfbfb;border:0.8px solid #d4d4d4;box-sizing:border-box;border-radius:1.2px;"></div>
<div style="left:1158.7px;top:194.3px;width:5.4px;height:5.4px;background:#fbfbfb;border:0.8px solid #d4d4d4;box-sizing:border-box;border-radius:1.2px;"></div>
<div style="left:1158.7px;top:219.8px;width:5.4px;height:5.4px;background:#fbfbfb;border:0.8px solid #d4d4d4;box-sizing:border-box;border-radius:1.2px;"></div>
<div style="left:1158.7px;top:241.3px;width:5.4px;height:5.4px;background:#fbfbfb;border:0.8px solid #d4d4d4;box-sizing:border-box;border-radius:1.2px;"></div>
<div style="left:1158.7px;top:263.3px;width:5.4px;height:5.4px;background:#fbfbfb;border:0.8px solid #d4d4d4;box-sizing:border-box;border-radius:1.2px;"></div>
<div style="left:1077.0px;top:219.8px;width:5.4px;height:5.4px;background:#fbfbfb;border:0.8px solid #d4d4d4;box-sizing:border-box;border-radius:1.2px;"></div>
<svg style="left:959.5px;top:146px;" width="8" height="11" viewBox="0 0 8 11"><path d="M1.6 1 V9.6 L5.8 3.8 Z" fill="#f6f6fa" stroke="#8a8ca8" stroke-width="0.7"/><circle cx="4.8" cy="2.4" r="1" fill="none" stroke="#8a8ca8" stroke-width="0.5"/></svg>
<div style="left:968.4px;top:143.3px;width:116px;height:15.4px;background:#fff;border:1px solid #d2d2d2;box-sizing:border-box;"></div>
<svg style="left:1074px;top:148.5px;" width="7" height="5" viewBox="0 0 7 5"><path d="M0.8 1 L3.5 3.8 L6.2 1" fill="none" stroke="#9a9a9a" stroke-width="0.9"/></svg>
<div style="left:1086.8px;top:143.5px;width:67px;height:15px;background:#e1e1e1;"></div>
<span class="t" style="left:1088.6px;top:143.8px;height:16px;line-height:16px;font-size:9.3px;color:#2c2c2c;transform:scaleX(1.0276);transform-origin:0 50%;">points</span>
<svg style="left:1143.5px;top:148.5px;" width="7" height="5" viewBox="0 0 7 5"><path d="M0.8 1 L3.5 3.8 L6.2 1" fill="none" stroke="#9a9a9a" stroke-width="0.9"/></svg>
<svg style="left:959.5px;top:168px;" width="8" height="12" viewBox="0 0 8 12"><path d="M1.6 2 V10.6 L5.8 4.8 Z" fill="#f6f6fa" stroke="#555a7a" stroke-width="0.8"/><rect x="1" y="1" width="1.6" height="1.6" fill="#d02a2a"/><rect x="1" y="7.6" width="1.6" height="1.6" fill="#3a8a3a"/><rect x="4.6" y="1.6" width="1.6" height="1.6" fill="#2a3a9a"/></svg>
<div style="left:968.4px;top:165.3px;width:116px;height:19px;background:#fff;border:1px solid #d2d2d2;box-sizing:border-box;"></div>
<div style="left:1070.6px;top:165.8px;width:13.4px;height:18px;background:#e0e0e0;border:1px solid #cdcdcd;box-sizing:border-box;"></div>
<svg style="left:1074px;top:172.5px;" width="7" height="5" viewBox="0 0 7 5"><path d="M0.8 1 L3.5 3.8 L6.2 1" fill="none" stroke="#9a9a9a" stroke-width="0.9"/></svg>
<svg style="left:959.5px;top:190px;" width="8" height="11" viewBox="0 0 8 11"><path d="M1.6 1 V9.6 L5.8 3.8 Z" fill="#fafafc" stroke="#b5b7c8" stroke-width="0.7"/><path d="M3 1.4 L5.4 2.6" stroke="#c0c2d2" stroke-width="0.6" stroke-dasharray="0.8 0.6"/></svg>
<div style="left:968.4px;top:187.3px;width:116px;height:19px;background:#fff;border:1px solid #d2d2d2;box-sizing:border-box;"></div>
<div style="left:969.5px;top:196.2px;width:101px;height:1.1px;background:#dcdcdc;"></div>
<div style="left:1070.6px;top:187.8px;width:13.4px;height:18px;background:#e0e0e0;border:1px solid #cdcdcd;box-sizing:border-box;"></div>
<svg style="left:1074px;top:194.5px;" width="7" height="5" viewBox="0 0 7 5"><path d="M0.8 1 L3.5 3.8 L6.2 1" fill="none" stroke="#9a9a9a" stroke-width="0.9"/></svg>
<span class="t" style="left:1093px;top:188.5px;height:16px;line-height:16px;font-size:9.3px;color:#444;">...</span>
<div style="left:962px;top:209.2px;width:200px;height:0.8px;background:#e2e2e2;"></div>
<svg style="left:959.5px;top:216px;" width="8" height="12" viewBox="0 0 8 12"><path d="M1 10.6 L3.2 1 H4.8 L7 10.6 Z" fill="#3c4060" stroke="#23263f" stroke-width="0.6"/><path d="M4 1.4 V10.4" stroke="#d9dbea" stroke-width="0.7"/></svg>
<div style="left:968.4px;top:212.6px;width:103.4px;height:19px;background:#fff;border:1px solid #d2d2d2;box-sizing:border-box;"></div>
<div style="left:1058px;top:213.2px;width:13.3px;height:17.8px;background:#ebebeb;border:1px solid #d6d6d6;box-sizing:border-box;"></div>
<div style="left:1058px;top:221.8px;width:13.3px;height:0.7px;background:#d0d0d0;"></div>
<svg style="left:1062px;top:215.5px;" width="6" height="4" viewBox="0 0 6 4"><path d="M3 0.8 L5 3.2 H1 Z" fill="#333"/></svg>
<svg style="left:1062px;top:224.5px;" width="6" height="4" viewBox="0 0 6 4"><path d="M3 3.2 L5 0.8 H1 Z" fill="#333"/></svg>
<div style="left:1087.1px;top:212.7px;width:19.7px;height:19.1px;background:#fff;border:1px solid #e6e6e6;box-sizing:border-box;"></div>
<div style="left:1087.1px;top:234.5px;width:19.7px;height:19.1px;background:#fff;border:1px solid #e6e6e6;box-sizing:border-box;"></div>
<div style="left:1110.9px;top:256.4px;width:19.2px;height:19.1px;background:#fff;border:1px solid #e6e6e6;box-sizing:border-box;"></div>
<svg style="left:1091.5px;top:217.0px;" width="10.6" height="10.6" viewBox="0 0 10.6 10.6"><path d="M1.6 9 V1.6 H9 V5 H5 V9 Z" fill="#4a4e6e"/><path d="M3.2 9 V3.2 H9" stroke="#8b8ea8" stroke-width="0.8" fill="none"/></svg>
<svg style="left:1115.0px;top:217.0px;" width="10.6" height="10.6" viewBox="0 0 10.6 10.6"><path d="M1.6 9 V3.6 Q1.6 1.6 3.6 1.6 H9 V5 H5 V9 Z" fill="#6b6e8c"/><path d="M3.2 9 V3.2 H9" stroke="#b9bbcc" stroke-width="0.7" fill="none"/></svg>
<svg style="left:1138.7px;top:217.0px;" width="10.6" height="10.6" viewBox="0 0 10.6 10.6"><path d="M1.6 9 V4.6 L4.6 1.6 H9 V5 H5 V9 Z" fill="#6b6e8c"/><path d="M3.2 9 V3.2 H9" stroke="#b9bbcc" stroke-width="0.7" fill="none"/></svg>
<svg style="left:1091.4px;top:240.20000000000002px;" width="11.2" height="7.2" viewBox="0 0 11.2 7.2"><path d="M1 3.6 L3.4 1.8 V2.4 H10.2 V4.8 H3.4 V5.4 Z" fill="#4a4e6e"/></svg>
<svg style="left:1114.7px;top:240.20000000000002px;" width="11.2" height="7.2" viewBox="0 0 11.2 7.2"><rect x="1" y="2.2" width="9.2" height="2.8" rx="1.4" fill="#6b6e8c"/><path d="M2.4 3.6 H8.6" stroke="#9da0b8" stroke-width="0.6"/></svg>
<svg style="left:1138.4px;top:240.20000000000002px;" width="11.2" height="7.2" viewBox="0 0 11.2 7.2"><rect x="0.8" y="2.2" width="9.6" height="2.8" fill="#4a4e6e"/><path d="M2.4 3.6 H8.6" stroke="#8b8ea8" stroke-width="0.6"/></svg>
<svg style="left:1091.7px;top:260.7px;" width="10.6" height="10.6" viewBox="0 0 10.6 10.6"><path d="M1.6 9.4 V1.6 H9.6 V3.6 H3.8 V9.4 Z" fill="#6f728f"/><path d="M1.6 9.4 V1.6 H9.6" stroke="#3c3f5c" stroke-width="0.8" fill="none"/></svg>
<svg style="left:1115.2px;top:260.7px;" width="10.6" height="10.6" viewBox="0 0 10.6 10.6"><path d="M1.6 9.4 V1.6 H9.6 V4.2 H4.2 V9.4 Z" fill="#3a3d5a"/></svg>
<svg style="left:1138.7px;top:260.7px;" width="10.6" height="10.6" viewBox="0 0 10.6 10.6"><path d="M3.4 9.4 V1.6 H9.6 V3.8 H5.8 V9.4 Z" fill="#6f728f"/><path d="M1.4 1.6 H9.6 M3.4 1.6 V9.4" stroke="#3c3f5c" stroke-width="0.8" fill="none"/></svg>
<div style="left:959px;top:281px;width:209.5px;height:11.5px;background:#e6e6e6;"></div>
<div style="left:1063px;top:286.5px;width:1.2px;height:1.2px;background:#444;"></div>
<div style="left:1169.5px;top:101.5px;width:14px;height:521.5px;background:#e8e8e8;"></div>
<div style="left:1169.5px;top:101.5px;width:14px;height:378px;background:#dadada;"></div>
<div style="left:1169.5px;top:157px;width:14px;height:104.5px;background:#c4c4c4;"></div>
<div style="left:1169.5px;top:363.8px;width:14px;height:0.8px;background:#c9c9c9;"></div>
<div style="left:1169.5px;top:431px;width:14px;height:0.8px;background:#c9c9c9;"></div>
<svg style="left:1170.5px;top:103px;" width="13" height="13" viewBox="0 0 13 13"><path d="M1.6 1 V9.4 L3.6 7.6 L5 10.8 L6.2 10.2 L4.8 7.2 L7.2 7 Z" fill="#fff" stroke="#5d6082" stroke-width="0.7"/><path d="M8 3 Q8.2 1.4 9.8 1.5 Q11.4 1.8 11 3.4 Q10.6 4.4 9.7 5 V6 M9.7 7.2 V8" stroke="#3b3f66" stroke-width="0.9" fill="none"/></svg>
<span class="t" style="left:1165.81px;top:121.75px;height:16px;line-height:16px;font-size:9.3px;color:#222;transform:rotate(90deg) scaleX(0.968);transform-origin:50% 50%;">Hints</span>
<svg style="left:1171px;top:160px;" width="12" height="12" viewBox="0 0 12 12"><path d="M1 4.6 L4 1.6 L7 4.6 V5.4 H1 Z" fill="#f4f4f8" stroke="#7f82a2" stroke-width="0.6"/><circle cx="2.2" cy="4.6" r="1.5" fill="#f0a030"/><rect x="4.6" y="4.4" width="2.6" height="6.4" fill="#7c82b6"/><rect x="8" y="3.6" width="2.6" height="7.2" fill="#8e94c6"/></svg>
<span class="t" style="left:1140.48px;top:203.00px;height:16px;line-height:16px;font-size:9.3px;color:#222;transform:rotate(90deg) scaleX(1.016);transform-origin:50% 50%;">Object Properties</span>
<svg style="left:1171px;top:264px;" width="12" height="12" viewBox="0 0 12 12"><path d="M2 1 V10 M2 3 H5 M2 6 H5 M2 9.6 H5" stroke="#4d5072" stroke-width="0.7" fill="none"/><rect x="5" y="1.6" width="2.2" height="2.2" fill="none" stroke="#4d5072" stroke-width="0.6"/><rect x="8" y="1.6" width="2.2" height="2.2" fill="none" stroke="#4d5072" stroke-width="0.6"/><path d="M5.4 6 H10 M5.4 9.6 H10" stroke="#8a8da8" stroke-width="0.8" stroke-dasharray="1 0.6"/></svg>
<span class="t" style="left:1143.32px;top:307.00px;height:16px;line-height:16px;font-size:9.3px;color:#222;transform:rotate(90deg) scaleX(1.043);transform-origin:50% 50%;">Object Manager</span>
<svg style="left:1171px;top:366.5px;" width="11" height="11.5" viewBox="0 0 11 11.5"><rect x="0.4" y="0.4" width="10" height="10.6" fill="#b4b6c8"/><rect x="1.4" y="1.6" width="8" height="8.2" fill="#9a9cb4"/><rect x="2.6" y="2.8" width="5.6" height="5.8" fill="#c4c6d6"/></svg>
<span class="t" style="left:1159.86px;top:391.15px;height:16px;line-height:16px;font-size:9.3px;color:#222;transform:rotate(90deg) scaleX(1.013);transform-origin:50% 50%;">Contour</span>
<svg style="left:1171px;top:435px;" width="12" height="12" viewBox="0 0 12 12"><path d="M1.6 10.6 L5.2 1.6 H6.4 L10 10.6 H8.2 L7.4 8.4 H4.2 L3.4 10.6 Z M4.8 6.8 H6.8 L5.8 4 Z" fill="#fff" stroke="#3b3f66" stroke-width="0.7" fill-rule="evenodd"/><rect x="0.4" y="0.4" width="1.6" height="1.6" fill="#3b3f66"/><rect x="9.6" y="0.4" width="1.6" height="1.6" fill="#3b3f66"/></svg>
<span class="t" style="left:1170.20px;top:448.75px;height:16px;line-height:16px;font-size:9.3px;color:#222;transform:rotate(90deg) scaleX(0.927);transform-origin:50% 50%;">T...</span>
<svg style="left:1170px;top:487px;" width="13.4" height="13.4" viewBox="0 0 13.4 13.4"><circle cx="6.6" cy="6.6" r="5.4" fill="#f6f6f6" stroke="#c8c8c8" stroke-width="0.8"/><path d="M3.4 6.6 H9.8 M6.6 3.4 V9.8" stroke="#b0b0b0" stroke-width="1"/></svg>
<div style="left:1184.5px;top:101.5px;width:12.5px;height:521.5px;background:#f2f2f2;"></div>
<div style="left:1190px;top:96.8px;width:1.4px;height:1.4px;background:#222;"></div>
<svg style="left:1185.0px;top:102px;" width="12" height="12" viewBox="0 0 12 12"><path d="M9.4 1 L11 2.6 L8.6 5 L7 3.4 Z" fill="#9a9a9a"/><path d="M7.4 4 L2.4 9 L1.6 10.6 L3.2 9.8 L8.2 4.8" fill="none" stroke="#a5a5a5" stroke-width="0.9"/></svg>
<svg style="left:1186.0px;top:116px;" width="10" height="7" viewBox="0 0 10 7"><path d="M1 5.6 L5 1.4 L9 5.6" fill="none" stroke="#c4c4c4" stroke-width="1"/></svg>
<svg style="left:1184.5px;top:127.7px;" width="12.5" height="11.8" viewBox="0 0 12.5 11.8"><rect x="0.4" y="0.4" width="11.7" height="11" fill="#fff" stroke="#b9b9b9" stroke-width="0.7"/><path d="M0.6 0.6 L11.9 11.2 M11.9 0.6 L0.6 11.2" stroke="#a9a9a9" stroke-width="0.7"/></svg>
<div style="left:1184.5px;top:141.1px;width:12.5px;height:11.8px;background:#262626;border:1.2px solid #111;box-sizing:border-box;"></div>
<div style="left:1184.5px;top:153.3px;width:12.5px;height:13.14px;background:#3f3f41;"></div>
<div style="left:1184.5px;top:166.14px;width:12.5px;height:13.14px;background:#555557;"></div>
<div style="left:1184.5px;top:178.98px;width:12.5px;height:13.14px;background:#6a6b6e;"></div>
<div style="left:1184.5px;top:191.82px;width:12.5px;height:13.14px;background:#7e8083;"></div>
<div style="left:1184.5px;top:204.66px;width:12.5px;height:13.14px;background:#929497;"></div>
<div style="left:1184.5px;top:217.5px;width:12.5px;height:13.14px;background:#a5a7aa;"></div>
<div style="left:1184.5px;top:230.34px;width:12.5px;height:13.14px;background:#babcbe;"></div>
<div style="left:1184.5px;top:243.18px;width:12.5px;height:13.14px;background:#cfd1d2;"></div>
<div style="left:1184.5px;top:256.02px;width:12.5px;height:13.14px;background:#e5e6e7;"></div>
<div style="left:1184.5px;top:268.86px;width:12.5px;height:13.14px;background:#ffffff;"></div>
<div style="left:1184.5px;top:281.7px;width:12.5px;height:13.14px;background:#2b3692;"></div>
<div style="left:1184.5px;top:294.54px;width:12.5px;height:13.14px;background:#00a1ec;"></div>
<div style="left:1184.5px;top:307.38px;width:12.5px;height:13.14px;background:#009b52;"></div>
<div style="left:1184.5px;top:320.22px;width:12.5px;height:13.14px;background:#ffe600;"></div>
<div style="left:1184.5px;top:333.06px;width:12.5px;height:13.14px;background:#f5301e;"></div>
<div style="left:1184.5px;top:345.9px;width:12.5px;height:13.14px;background:#f4168f;"></div>
<div style="left:1184.5px;top:358.74px;width:12.5px;height:13.14px;background:#a4528f;"></div>
<div style="left:1184.5px;top:371.58px;width:12.5px;height:13.14px;background:#fb8c14;"></div>
<div style="left:1184.5px;top:384.42px;width:12.5px;height:13.14px;background:#ffb3ac;"></div>
<div style="left:1184.5px;top:397.26px;width:12.5px;height:13.14px;background:#8a6f66;"></div>
<div style="left:1184.5px;top:410.1px;width:12.5px;height:13.14px;background:#c9c9ec;"></div>
<div style="left:1184.5px;top:422.94px;width:12.5px;height:13.14px;background:#9d99d1;"></div>
<div style="left:1184.5px;top:435.78px;width:12.5px;height:13.14px;background:#6489d0;"></div>
<div style="left:1184.5px;top:448.62px;width:12.5px;height:13.14px;background:#7270b9;"></div>
<div style="left:1184.5px;top:461.46px;width:12.5px;height:13.14px;background:#8383b1;"></div>
<div style="left:1184.5px;top:474.3px;width:12.5px;height:13.14px;background:#3d5b97;"></div>
<div style="left:1184.5px;top:487.14px;width:12.5px;height:13.14px;background:#49466e;"></div>
<div style="left:1184.5px;top:499.98px;width:12.5px;height:13.14px;background:#5c7ba1;"></div>
<div style="left:1184.5px;top:512.82px;width:12.5px;height:13.14px;background:#0784de;"></div>
<div style="left:1184.5px;top:525.66px;width:12.5px;height:13.14px;background:#8dd2f7;"></div>
<div style="left:1184.5px;top:538.5px;width:12.5px;height:13.14px;background:#a6c5dc;"></div>
<div style="left:1184.5px;top:551.34px;width:12.5px;height:13.14px;background:#8ba3b6;"></div>
<div style="left:1184.5px;top:564.18px;width:12.5px;height:13.14px;background:#5e7587;"></div>
<div style="left:1184.5px;top:577.02px;width:12.5px;height:13.14px;background:#3a4753;"></div>
<div style="left:1184.5px;top:589.9px;width:12.5px;height:2.2px;background:#2a5560;"></div>
<svg style="left:1186.0px;top:594.5px;" width="10" height="7" viewBox="0 0 10 7"><path d="M1 1.4 L5 5.6 L9 1.4" fill="none" stroke="#7a7a7a" stroke-width="1"/></svg>
<svg style="left:1186.0px;top:606.5px;" width="10" height="9" viewBox="0 0 10 9"><path d="M1 1 L4.4 4.5 L1 8 M5.4 1 L8.8 4.5 L5.4 8" fill="none" stroke="#a9a9a9" stroke-width="0.9"/></svg>
<div style="left:944.7px;top:118px;width:13px;height:478px;background:#ffffff;"></div>
<div style="left:944.7px;top:118px;width:13px;height:13px;background:#efefef;"></div>
<svg style="left:946.5px;top:120.5px;" width="10" height="8" viewBox="0 0 10 8"><path d="M1.6 6 L5 2.4 L8.4 6" fill="none" stroke="#333" stroke-width="1.5"/></svg>
<div style="left:944.7px;top:583px;width:13px;height:13px;background:#efefef;"></div>
<svg style="left:946.5px;top:585.5px;" width="10" height="8" viewBox="0 0 10 8"><path d="M1.6 2 L5 5.6 L8.4 2" fill="none" stroke="#333" stroke-width="1.5"/></svg>
<div style="left:945px;top:332px;width:12.5px;height:38.5px;background:#dcdcdc;"></div>
<div style="left:37px;top:596px;width:456.5px;height:13.6px;background:#f1f1f1;"></div>
<div style="left:37px;top:596px;width:456.5px;height:0.8px;background:#dedede;"></div>
<svg style="left:40.5px;top:600px;" width="5" height="7" viewBox="0 0 5 7"><path d="M0.6 0.6 H3 L4.4 2 V6.4 H0.6 Z" fill="#f8f8f8" stroke="#bdbdbd" stroke-width="0.6"/></svg>
<svg style="left:54.0px;top:601.4px;" width="3" height="4" viewBox="0 0 3 4"><path d="M0.4 2 L2.6 0.4 V3.6 Z" fill="#8a8a8a"/></svg>
<div style="left:57.2px;top:601.6px;width:0.7px;height:3.6px;background:#8a8a8a;"></div>
<svg style="left:69.2px;top:601.4px;" width="3" height="4" viewBox="0 0 3 4"><path d="M0.4 2 L2.6 0.4 V3.6 Z" fill="#8a8a8a"/></svg>
<span class="t" style="left:89.8px;top:595.4px;height:16px;line-height:16px;font-size:9.3px;color:#333;transform:scaleX(1.0058);transform-origin:0 50%;">1 of 1</span>
<svg style="left:130.3px;top:601.4px;" width="3" height="4" viewBox="0 0 3 4"><path d="M2.6 2 L0.4 0.4 V3.6 Z" fill="#8a8a8a"/></svg>
<svg style="left:143.1px;top:601.4px;" width="3" height="4" viewBox="0 0 3 4"><path d="M2.6 2 L0.4 0.4 V3.6 Z" fill="#8a8a8a"/></svg>
<div style="left:146.4px;top:601.6px;width:0.7px;height:3.6px;background:#8a8a8a;"></div>
<svg style="left:155.5px;top:600px;" width="5" height="7" viewBox="0 0 5 7"><path d="M0.6 0.6 H3 L4.4 2 V6.4 H0.6 Z" fill="#f8f8f8" stroke="#bdbdbd" stroke-width="0.6"/></svg>
<svg style="left:165.5px;top:596px;" width="48" height="13.6" viewBox="0 0 48 13.6"><path d="M0.5 13.6 V0.5 H41.5 L46.5 6 V13.6 Z" fill="#fff" stroke="#dcdcdc" stroke-width="0.7"/></svg>
<span class="t" style="left:174.5px;top:595.4px;height:16px;line-height:16px;font-size:9.2px;color:#333;transform:scaleX(0.9603);transform-origin:0 50%;">Page 1</span>
<div style="left:493.5px;top:596.3px;width:13.3px;height:13.3px;background:#efefef;"></div>
<svg style="left:495.5px;top:598.5px;" width="8" height="9" viewBox="0 0 8 9"><path d="M5.6 1.4 L2.2 4.5 L5.6 7.6" fill="none" stroke="#333" stroke-width="1.5"/></svg>
<div style="left:506.8px;top:596px;width:424px;height:13.6px;background:#ffffff;"></div>
<div style="left:672px;top:596.4px;width:92.2px;height:12.5px;background:#cdcdcd;"></div>
<div style="left:930.4px;top:596.3px;width:13.8px;height:13.3px;background:#efefef;"></div>
<svg style="left:933.5px;top:598.5px;" width="8" height="9" viewBox="0 0 8 9"><path d="M2.4 1.4 L5.8 4.5 L2.4 7.6" fill="none" stroke="#333" stroke-width="1.5"/></svg>
<div style="left:944.7px;top:596px;width:13px;height:13.6px;background:#ffffff;"></div>
<svg style="left:948px;top:599.5px;" width="7" height="7" viewBox="0 0 7 7"><circle cx="2.6" cy="2.6" r="1.7" fill="none" stroke="#a8a8a8" stroke-width="0.7"/><path d="M3.8 3.8 L6 6" stroke="#a8a8a8" stroke-width="0.9"/></svg>
<div style="left:20px;top:609.6px;width:938px;height:13.8px;background:#f5f5f5;"></div>
<div style="left:37px;top:609.6px;width:921px;height:0.8px;background:#e3e3e3;"></div>
<div style="left:30.6px;top:616.2px;width:1.2px;height:1.2px;background:#333;"></div>
<svg style="left:37.5px;top:611px;" width="10" height="11" viewBox="0 0 10 11"><path d="M7.4 0.8 L9.2 2.6 L7 4.8 L5.2 3 Z" fill="#1d2340"/><path d="M5.6 3.4 L1.4 7.8 L0.8 9.6 L2.6 9 L6.8 4.6" fill="#2a3050" stroke="#2a3050" stroke-width="0.8"/></svg>
<svg style="left:51px;top:613px;" width="7" height="8" viewBox="0 0 7 8"><path d="M5.4 0.8 L1.4 4 L5.4 7.2" fill="none" stroke="#c4c4c4" stroke-width="1"/></svg>
<svg style="left:61px;top:610.6px;" width="13.2" height="12.2" viewBox="0 0 13.2 12.2"><rect x="0.4" y="0.4" width="12.4" height="11.4" fill="#fff" stroke="#b5b5b5" stroke-width="0.7"/><path d="M0.6 0.6 L12.6 11.6 M12.6 0.6 L0.6 11.6" stroke="#a5a5a5" stroke-width="0.7"/></svg>
<div style="left:74px;top:610.6px;width:12.7px;height:12.2px;background:#00914b;"></div>
<div style="left:86.7px;top:610.6px;width:12.9px;height:12.2px;background:#f5321f;"></div>
<div style="left:99.6px;top:610.6px;width:13.2px;height:12.2px;background:#231f20;"></div>
<svg style="left:929px;top:612.5px;" width="8" height="9" viewBox="0 0 8 9"><path d="M2 1 L5.6 4.5 L2 8" fill="none" stroke="#d0d0d0" stroke-width="1"/></svg>
<svg style="left:941px;top:612.5px;" width="11" height="9" viewBox="0 0 11 9"><path d="M1.4 1 L5 4.5 L1.4 8 M5.6 1 L9.2 4.5 L5.6 8" fill="none" stroke="#d0d0d0" stroke-width="0.9"/></svg>
<div style="left:0px;top:623.3px;width:1197px;height:0.9px;background:#e6e6e6;"></div>
<span class="t" style="left:1px;top:629.4px;height:16px;line-height:16px;font-size:9.1px;color:#333;transform:scaleX(0.9640);transform-origin:0 50%;">( 146.858, 166.687 )</span>
<div style="left:88.5px;top:632px;width:10px;height:10.8px;background:#fafafa;border:1px solid #c6c6c6;box-sizing:border-box;"></div>
<svg style="left:92px;top:635.4px;" width="3" height="4" viewBox="0 0 3 4"><path d="M0.4 0.4 L2.6 2 L0.4 3.6 Z" fill="#222"/></svg>
<span class="t" style="left:120.2px;top:629.4px;height:16px;line-height:16px;font-size:9.2px;color:#333;transform:scaleX(0.9867);transform-origin:0 50%;">2 Objects Selected on Layer 1</span>
<svg style="left:847.5px;top:631.5px;" width="11" height="11" viewBox="0 0 11 11"><rect x="0.6" y="0.6" width="9.6" height="8.6" rx="1.2" fill="#b9c3d6" stroke="#8f9ab2" stroke-width="0.6"/><circle cx="5.4" cy="4.8" r="2.6" fill="#eef1f7" stroke="#7a85a0" stroke-width="0.6"/><circle cx="5.4" cy="4.8" r="1" fill="#7a85a0"/><path d="M2.6 10.2 H8.2" stroke="#a9b2c6" stroke-width="0.8"/></svg>
<svg style="left:866px;top:629.5px;" width="7" height="7" viewBox="0 0 7 7"><path d="M3.2 0.8 L5.8 3.4 L3.4 5.8 L0.8 3.4 Z" fill="#fdfdfd" stroke="#666" stroke-width="0.6"/><path d="M1.2 3.6 H5.6 L3.4 5.6 Z" fill="#e8851c"/></svg>
<svg style="left:874.3px;top:628.8px;" width="14.2" height="14.6" viewBox="0 0 14.2 14.6"><rect x="0.4" y="0.4" width="13.4" height="13.8" fill="#fff" stroke="#d9d9d9" stroke-width="0.7"/><path d="M0.6 0.6 L13.6 14" stroke="#b02a2a" stroke-width="0.9"/></svg>
<span class="t" style="left:890px;top:629.3px;height:16px;line-height:16px;font-size:9.3px;color:#333;transform:scaleX(0.9759);transform-origin:0 50%;">Fill Color</span>
<div style="left:1025.6px;top:626px;width:0.8px;height:22px;background:#e4e4e4;"></div>
<svg style="left:1029.5px;top:629.5px;" width="5" height="7" viewBox="0 0 5 7"><path d="M2.4 0.6 L3.6 3 V5 H1.2 V3 Z" fill="#f4f4f8" stroke="#7a7d9a" stroke-width="0.5"/><rect x="1" y="5.4" width="2.8" height="1" fill="#222"/></svg>
<svg style="left:1035.2px;top:629.4px;" width="14.2" height="14" viewBox="0 0 14.2 14"><rect x="0.4" y="0.4" width="13.4" height="13.2" fill="#fff" stroke="#e0e0e0" stroke-width="0.7"/><path d="M0.6 0.6 L13.6 13.4" stroke="#c22a2a" stroke-width="0.9"/></svg>
<span class="t" style="left:1050.7px;top:629.3px;height:16px;line-height:16px;font-size:9.3px;color:#333;transform:scaleX(1.0097);transform-origin:0 50%;">Outline Color</span>
<svg style="left:1070px;top:545px;" width="127" height="80" viewBox="0 0 1067 672"><g fill="#c3c3c3">
<path d="M595 85 L665 135 L620 200 L550 150 Z"/>
<path d="M185 348 Q205 305 232 285 Q330 305 430 292 Q560 268 650 226 Q668 240 650 272 Q580 312 500 328 Q350 365 185 348 Z"/>
<path d="M120 442 Q140 400 172 378 Q280 396 380 382 Q460 366 512 346 Q500 372 440 410 Q300 462 120 442 Z"/>
<path d="M60 522 Q80 488 112 464 Q240 484 360 462 Q470 436 540 412 Q600 402 630 440 Q650 490 600 540 Q560 572 505 590 Q540 560 580 520 Q600 490 585 472 Q560 462 520 476 Q400 524 260 548 Q150 562 60 522 Z"/>
<path fill-rule="evenodd" d="M650 228 Q690 262 705 258 Q740 190 795 138 Q800 170 802 175 Q850 240 925 278 Q952 320 935 392 Q900 452 850 452 Q800 430 760 400 Q720 402 680 410 Q625 392 612 340 Q620 300 650 275 Z M682 300 Q690 330 705 334 Q745 345 770 340 Q795 315 800 290 Q770 262 740 256 Q705 270 682 300 Z M822 328 Q828 352 835 362 Q865 378 890 380 Q900 362 898 350 Q860 330 822 328 Z"/>
</g></svg>
<div style="left:0px;top:649.6px;width:1197px;height:0.8px;background:#c9d8e2;"></div>
<div style="left:379px;top:650px;width:28px;height:22px;background:#e2edf5;"></div>
<div style="left:379px;top:670.6px;width:28px;height:1.4px;background:#b9c6d2;"></div>
<div style="left:437px;top:650px;width:30.5px;height:22px;background:#e2ecf4;"></div>
<div style="left:437px;top:670.6px;width:30.5px;height:1.4px;background:#b9c6d2;"></div>
<svg style="left:4.5px;top:654px;" width="14" height="14" viewBox="0 0 14 14"><path d="M0.6 2.4 L5.6 1.6 V6.4 H0.6 Z M6.4 1.5 L13 0.5 V6.4 H6.4 Z M0.6 7.2 H5.6 V12 L0.6 11.2 Z M6.4 7.2 H13 V13.2 L6.4 12.1 Z" fill="#0a0a0a"/></svg>
<svg style="left:32px;top:653.5px;" width="16" height="16" viewBox="0 0 16 16"><circle cx="9" cy="6.2" r="4.3" fill="none" stroke="#0a0a0a" stroke-width="1.5"/><path d="M5.8 9.4 L1.6 13.8" stroke="#0a0a0a" stroke-width="1.8" stroke-linecap="round"/></svg>
<svg style="left:62.5px;top:654px;" width="14" height="14" viewBox="0 0 14 14"><circle cx="7" cy="7" r="6.5" fill="#f0b51c"/><path d="M3.4 8 Q3.6 3.6 7 3.6 Q10.4 3.6 10.6 8 Q10.2 11 7 11 Q3.8 11 3.4 8 Z" fill="#2a2418"/><path d="M4.8 8.4 Q7 10.6 9.2 8.4 Q7 9.2 4.8 8.4 Z" fill="#f0b51c"/><circle cx="5.4" cy="6.4" r="0.8" fill="#f0b51c"/><circle cx="8.6" cy="6.4" r="0.8" fill="#f0b51c"/></svg>
<svg style="left:91.5px;top:656px;" width="15" height="10" viewBox="0 0 15 10"><rect x="0" y="0" width="15" height="10" fill="#e9f1f8"/><path d="M2 2.4 H12.6 M1.4 4.6 H4.8 M6 4.6 H9 M10 4.6 H13.4 M1.6 7 H5.2 M6.2 7 H9.6 M10.4 7 H13.2" stroke="#1f2f9a" stroke-width="1.3"/><path d="M5 1 L7.4 0.6 L9.6 1.2" stroke="#1f2f9a" stroke-width="0.7" fill="none"/></svg>
<svg style="left:121.8px;top:654.2px;" width="14" height="14" viewBox="0 0 14 14"><circle cx="6.8" cy="6.8" r="6.5" fill="#fff"/><path d="M6.8 6.8 L1.2 3.5 A6.5 6.5 0 0 1 12.4 3.5 Z" fill="#e33b2e"/><path d="M6.8 6.8 L12.4 3.5 A6.5 6.5 0 0 1 6.8 13.3 Z" fill="#f8c51c"/><path d="M6.8 6.8 L6.8 13.3 A6.5 6.5 0 0 1 1.2 3.5 Z" fill="#2ea04a"/><circle cx="6.8" cy="6.8" r="3.1" fill="#fff"/><circle cx="6.8" cy="6.8" r="2.4" fill="#3b7de0"/></svg>
<svg style="left:150.8px;top:654.2px;" width="14" height="14" viewBox="0 0 14 14"><circle cx="6.8" cy="7" r="6.3" fill="#ff7a1a"/><path d="M2 3.4 Q6 0.4 10.6 2.2 Q13.4 4.6 13 8 Q11.4 4.4 8 4.6 Q5 4.8 4.4 7.4 Q2.6 6 2 3.4 Z" fill="#ffbf2e"/><circle cx="7.2" cy="7.4" r="3" fill="#7a3ad0"/><path d="M4.6 8.6 Q6 10.6 9 9.6 Q7 9.4 6.4 7.6 Z" fill="#ff4f5e"/></svg>
<svg style="left:180.2px;top:654px;" width="14" height="14" viewBox="0 0 14 14"><path d="M7 0.8 Q8 3 10.4 4.8 Q13 7.4 11.6 10.6 Q10.2 13.2 7 13.2 Q3.8 13.2 2.4 10.6 Q1 7.4 3.6 5 Q5.6 3.2 7 0.8 Z" fill="#e8541c"/><path d="M7 4.6 Q7.4 6 8.8 7.2 Q10.2 8.8 9.4 10.6 Q8.6 12 7 12 Q5.4 12 4.6 10.6 Q3.8 8.8 5.2 7.2 Q6.6 6 7 4.6 Z" fill="#fdf3ec"/><path d="M7 8 Q8.4 9.4 7.8 10.8 Q7.4 11.4 7 11.4 Q6.6 11.4 6.2 10.8 Q5.6 9.4 7 8 Z" fill="#e8541c"/></svg>
<svg style="left:210px;top:654.5px;" width="14" height="13" viewBox="0 0 14 13"><path d="M4.4 2.6 Q4.4 0.6 7 0.6 Q9.6 0.6 9.6 2.6" fill="none" stroke="#2a8ad8" stroke-width="1"/><rect x="0.6" y="2.4" width="12.8" height="10.2" rx="1" fill="#0f3f7a"/><rect x="4" y="4.6" width="2.6" height="2.6" fill="#f25022"/><rect x="7.2" y="4.6" width="2.6" height="2.6" fill="#7fba00"/><rect x="4" y="7.8" width="2.6" height="2.6" fill="#00a4ef"/><rect x="7.2" y="7.8" width="2.6" height="2.6" fill="#ffb900"/></svg>
<svg style="left:241.5px;top:656.3px;" width="10" height="10" viewBox="0 0 10 10"><rect x="0" y="0" width="9.6" height="9.6" rx="1.4" fill="#0c5db5"/><rect x="1.6" y="1.6" width="2.6" height="6.2" rx="0.4" fill="#fff"/><rect x="5.4" y="1.6" width="2.6" height="4" rx="0.4" fill="#fff"/></svg>
<svg style="left:269.4px;top:654.8px;" width="13" height="13" viewBox="0 0 13 13"><circle cx="6.2" cy="6.2" r="6" fill="#2a9bd8"/><path d="M2.6 6.2 L9.8 3.2 L8.6 9.6 L6.4 8 L5.4 9.2 L5.2 7.4 L8.4 4.6 L4.4 7 Z" fill="#fff"/></svg>
<svg style="left:298.6px;top:655.5px;" width="13" height="11" viewBox="0 0 13 11"><path d="M0.6 1.4 H4.4 L5.4 2.6 H11.8 V10 H0.6 Z" fill="#f4c64a"/><path d="M0.6 4 H11.8 V10 H0.6 Z" fill="#f9d873"/><rect x="3.4" y="6.6" width="5.6" height="3.6" fill="#3a7ac8"/><rect x="4.8" y="8.2" width="2.8" height="2" fill="#f9d873"/></svg>
<svg style="left:327.8px;top:654.6px;" width="13" height="13" viewBox="0 0 13 13"><rect x="0.2" y="0.2" width="12.4" height="12.4" rx="2.6" fill="#f39320"/><path d="M3.4 7 H9.6 Q9.8 3.4 6.6 3.2 Q3.4 3.2 3.2 6.6 Q3.2 10 6.6 10 Q8.6 10 9.6 8.8" fill="none" stroke="#fff" stroke-width="1.3"/></svg>
<svg style="left:357px;top:654.4px;" width="14" height="14" viewBox="0 0 14 14"><circle cx="6.7" cy="6.7" r="6.5" fill="#5561ea"/><path d="M3.4 4.8 Q5 4 6.7 4 Q8.4 4 10 4.8 Q11 7 10.8 9.2 Q9.8 10 8.8 10 L8.2 9.2 H5.2 L4.6 10 Q3.6 10 2.6 9.2 Q2.4 7 3.4 4.8 Z" fill="#fff"/><circle cx="5.3" cy="7.2" r="0.9" fill="#5561ea"/><circle cx="8.1" cy="7.2" r="0.9" fill="#5561ea"/></svg>
<svg style="left:386px;top:654.6px;" width="13" height="13" viewBox="0 0 13 13"><rect width="13" height="13" fill="#3f9a3a"/><path d="M0 3 L10 13 L6.4 13 L0 7.4 Z" fill="#eef7ec"/><path d="M2.4 0 L13 9.6 L13 6.6 L6.4 0 Z" fill="#86c67a"/><path d="M8.6 0 L13 3.6 V0 Z" fill="#b0dca6"/><path d="M0 0 L13 13" stroke="#fff" stroke-width="1"/></svg>
<svg style="left:414.5px;top:655px;" width="16" height="12" viewBox="0 0 16 12"><rect x="1.4" y="7" width="2.8" height="4.4" rx="0.8" fill="#3a68d8"/><rect x="5.8" y="4.6" width="2.8" height="6.8" rx="0.8" fill="#3a68d8"/><path d="M10.4 11.4 V3.4 L13.2 0.8 V11.4 Z" fill="#3a68d8"/></svg>
<svg style="left:444px;top:653px;" width="22" height="19" viewBox="0 0 22 19"><path d="M3 3.4 Q5.4 0.6 8 2.4 Q9.6 4.4 6.6 6.4 L4 8.2 H9.6" fill="none" stroke="#8e1c1c" stroke-width="2"/><circle cx="11.6" cy="7.6" r="1.9" fill="#e01c1c"/><path d="M14 9 V17.4 L16.2 15.4 L17.6 18.4 L18.8 17.8 L17.4 15 L20 14.8 Z" fill="#fff" stroke="#333" stroke-width="0.6"/></svg>
<span class="t" style="left:446.2px;top:658.2px;height:16px;line-height:16px;font-size:3.6px;color:#333;">EZCAP</span>
<svg style="left:910.5px;top:656px;" width="11" height="9" viewBox="0 0 11 9"><path d="M1 7.4 L5.4 2 L9.8 7.4" fill="none" stroke="#222" stroke-width="1"/></svg>
<svg style="left:935.5px;top:655px;" width="12" height="13" viewBox="0 0 12 13"><rect x="1.4" y="1.4" width="5.8" height="9" rx="1.2" fill="none" stroke="#333" stroke-width="0.8"/><path d="M7.2 5 L10 3.4 V8.6 L7.2 7 Z" fill="none" stroke="#333" stroke-width="0.7"/><path d="M2.4 12 H6.4" stroke="#333" stroke-width="0.7"/></svg>
<svg style="left:961px;top:654.5px;" width="10" height="14" viewBox="0 0 10 14"><rect x="3" y="0.6" width="4.2" height="8" rx="2" fill="#0a0a0a"/><path d="M1.4 6.4 Q1.4 10.4 5.1 10.4 Q8.8 10.4 8.8 6.4" fill="none" stroke="#0a0a0a" stroke-width="0.9"/><path d="M5.1 10.4 V12.8 M3 13 H7.2" stroke="#0a0a0a" stroke-width="0.9"/></svg>
<svg style="left:983.5px;top:656.5px;" width="15" height="9" viewBox="0 0 15 9"><rect x="4" y="1.6" width="9.4" height="5.4" rx="0.8" fill="none" stroke="#222" stroke-width="0.8"/><rect x="5.2" y="2.8" width="6.6" height="3" fill="#111"/><path d="M13.8 3.4 V5.4" stroke="#222" stroke-width="0.9"/><path d="M0.6 3.2 H2.6 M0.6 5.2 H2.6 M2.6 2.2 V6.4 H3.8" stroke="#111" stroke-width="0.8" fill="none"/></svg>
<svg style="left:1010.5px;top:655.5px;" width="13" height="12" viewBox="0 0 13 12"><path d="M1.4 9.8 Q1.6 2 10.8 1.6" fill="none" stroke="#555" stroke-width="0.8"/><path d="M3.8 10 Q4.2 4.6 10.8 4.2" fill="none" stroke="#555" stroke-width="0.8"/><path d="M6.2 10.2 Q6.6 7.2 10.6 6.8" fill="none" stroke="#555" stroke-width="0.8"/><circle cx="9.6" cy="10" r="1" fill="#222"/></svg>
<svg style="left:1033.5px;top:655.5px;" width="15" height="12" viewBox="0 0 15 12"><path d="M1 4.2 H3 L5.6 1.8 V10 L3 7.6 H1 Z" fill="none" stroke="#333" stroke-width="0.8"/><path d="M7.4 4 Q8.6 5.8 7.4 7.8 M9.4 2.6 Q11.4 5.8 9.4 9.2 M11.4 1.4 Q14.2 5.8 11.4 10.4" fill="none" stroke="#444" stroke-width="0.8"/></svg>
<svg style="left:1058.5px;top:655px;" width="15" height="13" viewBox="0 0 15 13"><path d="M10 1.2 Q12.4 0.6 12.4 3 Q11.6 5.6 6.6 8 Q3.4 9.2 2.4 10.4 Q1.4 12 3.4 12 Q5.4 11.6 5.6 9.4 L8 4.6 Q8.8 1.8 10 1.2 Z M7.2 7.6 Q9.6 8 9 10.4" fill="none" stroke="#222" stroke-width="0.9"/></svg>
<span class="t" style="left:1083.5px;top:654px;height:16px;line-height:16px;font-size:9.2px;color:#222;transform:scaleX(0.8828);transform-origin:0 50%;">ENG</span>
<span class="t" style="left:1114.5px;top:654px;height:16px;line-height:16px;font-size:9.2px;color:#222;transform:scaleX(0.9632);transform-origin:0 50%;">5:13 PM</span>
<svg style="left:1164.5px;top:655.5px;" width="15" height="13" viewBox="0 0 15 13"><path d="M1 0.8 H12 V9.4 H6 L3.6 11.8 V9.4 H1 Z" fill="#0a0a0a"/><path d="M2.6 3 H10.4 M2.6 5 H10.4 M2.6 7 H8" stroke="#d4dfee" stroke-width="0.7"/><circle cx="11" cy="9.8" r="2.4" fill="#d4dfee"/><circle cx="11" cy="9.8" r="1.7" fill="none" stroke="#111" stroke-width="0.7"/><path d="M10.2 9.8 L10.8 10.5 L11.9 9.2" stroke="#111" stroke-width="0.6" fill="none"/></svg>
</div></body></html>
